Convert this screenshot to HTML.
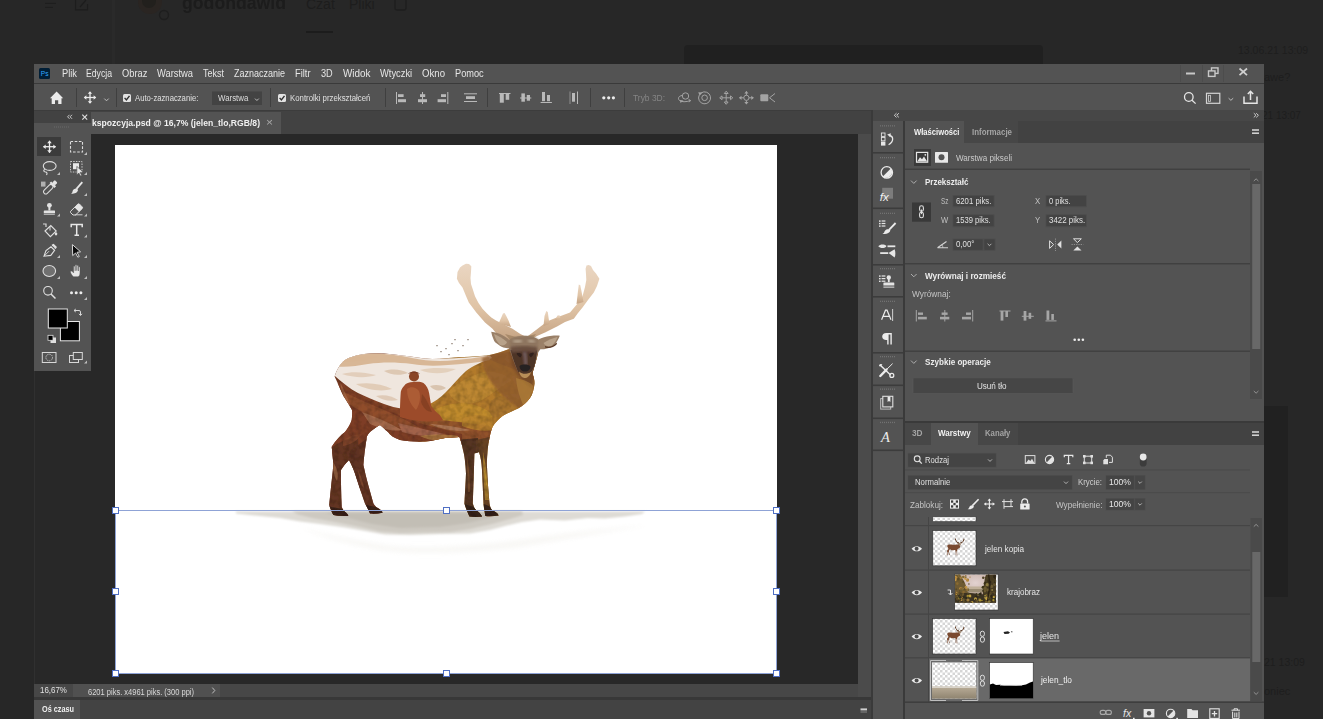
<!DOCTYPE html>
<html><head><meta charset="utf-8">
<style>
*{margin:0;padding:0;box-sizing:border-box}
html,body{width:1323px;height:719px;overflow:hidden;background:#262626;font-family:"Liberation Sans",sans-serif;color:#ddd;font-size:10px;position:relative}
.a{position:absolute}
.t{position:absolute;white-space:nowrap;line-height:1;transform-origin:0 0}
svg{position:absolute;overflow:visible}
</style></head><body>
<!-- ===== background app (dimmed) ===== -->
<div class="a" style="left:0;top:0;width:1323px;height:719px;background:#272727"></div>
<div class="a" style="left:112px;top:0;width:3px;height:64px;background:#2a2a2a"></div>
<div class="a" style="left:684px;top:45px;width:359px;height:19px;background:#202020;border-radius:4px 4px 0 0"></div>
<div class="a" style="left:1264px;top:406px;width:24px;height:191px;background:#212121"></div>

<svg width="1323" height="719" style="left:0;top:0">
 <g fill="#1e1e1e"><rect x="45" y="2.8" width="11" height="1.2"/><rect x="45" y="6.8" width="8" height="1.2"/></g>
 <path d="M75.5 0 V9.8 H87.5 V4" fill="none" stroke="#1d1d1d" stroke-width="1.2"/>
 <path d="M80 7 L86 0" stroke="#1d1d1d" stroke-width="1.2"/>
 <circle cx="150" cy="2" r="12" fill="#2a2522"/>
 <circle cx="149" cy="1" r="7" fill="#22201d"/>
 <circle cx="164" cy="15" r="4.5" fill="none" stroke="#1e1e1e" stroke-width="1.4"/>
 <rect x="306" y="31" width="27" height="2" fill="#1c1c1c"/>
 <rect x="395" y="-3" width="11" height="13" rx="2" fill="none" stroke="#1e1e1e" stroke-width="1.4"/>
</svg>
<div class="t" style="left:182px;top:-7px;font-size:19px;font-weight:bold;color:#1c1c1c;transform:scaleX(0.93)">godondawid</div>
<div class="t" style="left:306px;top:-3.5px;font-size:14px;color:#1d1d1d">Czat</div>
<div class="t" style="left:349px;top:-3.5px;font-size:14px;color:#1d1d1d">Pliki</div>
<div class="t" style="left:1238px;top:45px;font-size:10.5px;color:#1e1e1e">13.06.21 13:09</div>
<div class="t" style="left:1264px;top:72px;font-size:11px;color:#1e1e1e">awe?</div>
<div class="t" style="left:1262px;top:111px;font-size:10px;color:#1e1e1e">21 13:07</div>
<div class="t" style="left:1264px;top:657px;font-size:10.5px;color:#1e1e1e">21 13:09</div>
<div class="t" style="left:1264px;top:686px;font-size:11px;color:#1e1e1e">oniec</div>

<!-- ===== PS window ===== -->
<!-- menubar -->
<div class="a" style="left:34px;top:64px;width:1230px;height:19px;background:#535353"></div>
<div class="a" style="left:34px;top:83px;width:1230px;height:1px;background:#3a3a3a"></div>
<!-- options bar -->
<div class="a" style="left:34px;top:84px;width:1230px;height:26px;background:#535353"></div>
<div class="a" style="left:34px;top:110px;width:1230px;height:1px;background:#3c3c3c"></div>
<!-- doc tab bar -->
<div class="a" style="left:34px;top:111px;width:837px;height:23px;background:#424242"></div>
<div class="a" style="left:91px;top:112px;width:190px;height:22px;background:#535353"></div>
<!-- pasteboard -->
<div class="a" style="left:34px;top:134px;width:824px;height:550px;background:#282828"></div>
<div class="a" style="left:34px;top:134px;width:1px;height:550px;background:#303030"></div>
<!-- vertical scroll strip -->
<div class="a" style="left:858px;top:134px;width:13px;height:563px;background:#4b4b4b"></div>
<div class="a" style="left:871px;top:110px;width:2px;height:609px;background:#3a3a3a"></div>
<!-- status bar -->
<div class="a" style="left:34px;top:684px;width:824px;height:13px;background:#474747"></div>
<div class="a" style="left:73px;top:684px;width:147px;height:13px;background:#505050"></div>
<div class="a" style="left:34px;top:697px;width:837px;height:3px;background:#383838"></div>
<!-- timeline -->
<div class="a" style="left:34px;top:700px;width:837px;height:19px;background:#434343"></div>
<div class="a" style="left:34px;top:700px;width:46px;height:19px;background:#535353"></div>

<!-- right dock header strip -->
<div class="a" style="left:873px;top:110px;width:391px;height:11px;background:#474747"></div>
<!-- icon column -->
<div class="a" style="left:873px;top:121px;width:30px;height:598px;background:#535353"></div>
<div class="a" style="left:903px;top:121px;width:2px;height:598px;background:#3a3a3a"></div>
<!-- properties panel -->
<div class="a" style="left:905px;top:121px;width:359px;height:22px;background:#424242"></div>
<div class="a" style="left:905px;top:121px;width:59px;height:22px;background:#535353"></div>
<div class="a" style="left:964px;top:121px;width:54px;height:22px;background:#474747"></div>
<div class="a" style="left:905px;top:143px;width:359px;height:278px;background:#535353"></div>
<div class="a" style="left:905px;top:421px;width:359px;height:2px;background:#3a3a3a"></div>
<!-- layers panel -->
<div class="a" style="left:905px;top:423px;width:359px;height:22px;background:#424242"></div>
<div class="a" style="left:905px;top:423px;width:26px;height:22px;background:#474747"></div>
<div class="a" style="left:931px;top:423px;width:47px;height:22px;background:#535353"></div>
<div class="a" style="left:978px;top:423px;width:40px;height:22px;background:#474747"></div>
<div class="a" style="left:905px;top:445px;width:359px;height:274px;background:#535353"></div>


<!-- ===== Tools panel ===== -->
<div class="a" style="left:34px;top:112px;width:57px;height:11px;background:#424242"></div>
<div class="a" style="left:34px;top:123px;width:57px;height:248px;background:#535353"></div>
<div class="a" style="left:37px;top:137px;width:24px;height:18.5px;background:#3b3b3b"></div>
<svg width="1323" height="719" style="left:0;top:0">
 <g fill="none" stroke="#d8d8d8" stroke-width="0.9">
  <path d="M69.5 114.8 L67.6 116.8 L69.5 118.8 M72 114.8 L70.1 116.8 L72 118.8"/>
 </g>
 <g stroke="#e0e0e0" stroke-width="1.1"><line x1="82.3" y1="114.6" x2="87.2" y2="119.6"/><line x1="87.2" y1="114.6" x2="82.3" y2="119.6"/></g>
 <g fill="#6a6a6a"><rect x="54" y="126.5" width="1" height="1"/><rect x="56" y="126.5" width="1" height="1"/><rect x="58" y="126.5" width="1" height="1"/><rect x="60" y="126.5" width="1" height="1"/><rect x="62" y="126.5" width="1" height="1"/><rect x="64" y="126.5" width="1" height="1"/><rect x="66" y="126.5" width="1" height="1"/><rect x="68" y="126.5" width="1" height="1"/></g>
 <!-- move -->
 <g stroke="#ececec" stroke-width="1.3"><line x1="43.5" y1="146.7" x2="55.5" y2="146.7"/><line x1="49.5" y1="140.8" x2="49.5" y2="152.7"/></g>
 <g fill="#ececec"><path d="M49.5 140.5 L51.8 143.2 L47.2 143.2Z"/><path d="M49.5 153 L51.8 150.3 L47.2 150.3Z"/><path d="M43 146.7 L45.7 144.4 L45.7 149Z"/><path d="M56 146.7 L53.3 144.4 L53.3 149Z"/></g>
 <!-- marquee -->
 <rect x="70.5" y="141.5" width="12" height="10.5" fill="none" stroke="#dcdcdc" stroke-width="1.1" stroke-dasharray="2.6 1.6"/>
 <!-- small triangles -->
 <g fill="#bdbdbd">
  <path d="M84 155 L87 155 L87 152Z"/><path d="M57 175 L60 175 L60 172Z"/><path d="M84 175 L87 175 L87 172Z"/><path d="M84 196 L87 196 L87 193Z"/>
  <path d="M57 216.5 L60 216.5 L60 213.5Z"/><path d="M84 216.5 L87 216.5 L87 213.5Z"/><path d="M84 237.5 L87 237.5 L87 234.5Z"/>
  <path d="M57 258 L60 258 L60 255Z"/><path d="M84 258 L87 258 L87 255Z"/><path d="M57 279 L60 279 L60 276Z"/><path d="M84 279 L87 279 L87 276Z"/><path d="M84 300 L87 300 L87 297Z"/><path d="M84 363.5 L87 363.5 L87 360.5Z"/>
 </g>
 <!-- lasso -->
 <g fill="none" stroke="#dedede" stroke-width="1.1">
  <ellipse cx="49.7" cy="166" rx="6.4" ry="4.4"/>
  <path d="M45 169.5 C43 170 43.5 172 45.5 172 C47 172 47.5 173.5 46.5 175"/>
 </g>
 <!-- object select -->
 <rect x="70.5" y="161.5" width="11.5" height="10.5" fill="none" stroke="#c8c8c8" stroke-width="1" stroke-dasharray="1.5 1.2"/>
 <rect x="73" y="163.2" width="6" height="6" fill="#e8e8e8"/>
 <path d="M76.8 166.4 L83.2 172 L80.2 172.4 L81.8 175.4 L80.4 176 L78.8 173 L76.8 175Z" fill="#e8e8e8" stroke="#535353" stroke-width="0.7"/>
 <!-- eyedropper -->
 <rect x="41" y="181.6" width="4.5" height="5" fill="#cfcfcf" opacity="0.75"/>
 <g transform="rotate(45 49.5 188)">
  <rect x="47.3" y="184" width="4.4" height="11.5" rx="2.2" fill="none" stroke="#e0e0e0" stroke-width="1"/>
  <rect x="46" y="182.2" width="7" height="2.2" fill="#e4e4e4"/>
  <rect x="47.6" y="178.6" width="3.8" height="3.8" rx="1" fill="#e4e4e4"/>
 </g>
 <!-- brush -->
 <path d="M82.3 182.2 L76.5 188.8" stroke="#e6e6e6" stroke-width="1.8"/>
 <path d="M76.8 188.5 C73 188.5 72.5 191 72.5 192 C72 193 71 193.8 71 193.8 C74 194 77.5 193 78 190Z" fill="#e6e6e6"/>
 <!-- stamp -->
 <g fill="#e2e2e2"><circle cx="49.4" cy="205.3" r="2.4"/><rect x="48.4" y="206.5" width="2" height="4"/><path d="M44.5 210.5 H54.5 Q55 210.5 55 211 V213.2 H43.8 V211 Q43.8 210.5 44.5 210.5Z"/><rect x="43.8" y="213.8" width="11" height="1.1" opacity="0.7"/></g>
 <!-- eraser -->
 <path d="M70.6 211.3 L77.8 204.2 Q78.6 203.4 79.5 204.2 L82.2 206.9 Q83 207.8 82.2 208.6 L75.5 215 L73 215 L70.6 212.6 Q70 212 70.6 211.3Z" fill="none" stroke="#dedede" stroke-width="1"/>
 <path d="M74.6 207.6 L77.8 204.2 Q78.6 203.4 79.5 204.2 L82.2 206.9 Q83 207.8 82.2 208.6 L79 211.8Z" fill="#e4e4e4"/>
 <line x1="75" y1="214.8" x2="82.5" y2="214.8" stroke="#dedede" stroke-width="0.9"/>
 <!-- bucket -->
 <path d="M45 231 L50.8 225.5 L56.2 231 L50.4 236.6Z" fill="none" stroke="#e0e0e0" stroke-width="1.1"/>
 <path d="M43 224 L46 224 L46 227" fill="none" stroke="#d8d8d8" stroke-width="1.2"/>
 <path d="M50 226 L50 230.5" stroke="#e0e0e0" stroke-width="1"/>
 <ellipse cx="56" cy="233.8" rx="1.3" ry="1.6" fill="#e0e0e0"/>
 <!-- T -->
 <path d="M71.2 227.2 V224.6 H82.2 V227.2 M76.7 224.6 V235.3 M74.5 235.3 H79" fill="none" stroke="#e8e8e8" stroke-width="1.5"/>
 <!-- pen -->
 <path d="M44 256.2 L46 250.5 L51 246.8 L54.6 250.4 L50.8 255.4 Z" fill="none" stroke="#e0e0e0" stroke-width="1.1"/>
 <path d="M52 245.5 L53.5 244.6 L56 247.1 L55.1 248.6" fill="#e0e0e0" stroke="#e0e0e0" stroke-width="1.5"/>
 <path d="M44 256.2 L49 251.2" stroke="#e0e0e0" stroke-width="0.9"/>
 <!-- path select arrow -->
 <path d="M72.4 244.6 L80.6 251.8 L77 252.3 L79.3 256.5 L77.8 257.2 L75.6 253 L72.7 255.6Z" fill="#0a0a0a" stroke="#d4d4d4" stroke-width="1"/>
 <!-- ellipse -->
 <ellipse cx="49.3" cy="271" rx="6.3" ry="5.5" fill="#707070" stroke="#e0e0e0" stroke-width="1.1"/>
 <!-- hand -->
 <path d="M73.4 276.8 C71.5 275 70.4 272.8 70.4 271.6 C70.6 270.8 71.8 270.8 72.6 271.8 L73.6 272.8 V266.8 C73.6 265.8 75.2 265.8 75.2 266.8 V270.8 V265.6 C75.2 264.6 76.8 264.6 76.8 265.6 V270.6 V266 C76.8 265 78.4 265 78.4 266 V271 V267.5 C78.4 266.5 80 266.5 80 267.5 V273 C80 275 79 276.8 77.5 276.8Z" fill="#e6e6e6" stroke="#535353" stroke-width="0.5"/>
 <!-- zoom -->
 <circle cx="48" cy="290.8" r="4.3" fill="none" stroke="#e0e0e0" stroke-width="1.1"/>
 <line x1="51" y1="294" x2="55.5" y2="298.5" stroke="#e0e0e0" stroke-width="1.5"/>
 <!-- dots -->
 <g fill="#ececec"><circle cx="71.5" cy="292.8" r="1.5"/><circle cx="76.2" cy="292.8" r="1.5"/><circle cx="80.9" cy="292.8" r="1.5"/></g>
 <!-- colors -->
 <rect x="60.4" y="321.5" width="19" height="19.3" fill="#000" stroke="#e8e8e8" stroke-width="1"/>
 <rect x="48.3" y="309" width="19" height="19" fill="#000" stroke="#e8e8e8" stroke-width="1"/>
 <path d="M74 310.5 L79 310.5 Q80.5 310.5 80.5 312 L80.5 315" fill="none" stroke="#d8d8d8" stroke-width="1"/>
 <path d="M74 310.5 L75.8 309 M74 310.5 L75.8 312 M80.5 315.5 L79 313.8 M80.5 315.5 L82 313.8" fill="none" stroke="#d8d8d8" stroke-width="1"/>
 <rect x="50.5" y="337.5" width="5.5" height="5.5" fill="#e0e0e0"/>
 <rect x="48" y="335.3" width="5" height="5" fill="#000" stroke="#e0e0e0" stroke-width="0.8"/>
 <!-- quick mask / screen mode -->
 <rect x="42.3" y="352.5" width="13.7" height="10" fill="none" stroke="#d8d8d8" stroke-width="1"/>
 <circle cx="49.2" cy="357.5" r="3.3" fill="none" stroke="#d8d8d8" stroke-width="0.9" stroke-dasharray="1.2 1"/>
 <rect x="69.5" y="355.5" width="9" height="7" fill="none" stroke="#d8d8d8" stroke-width="1"/>
 <rect x="73.3" y="352.5" width="9" height="7" fill="#535353" stroke="#d8d8d8" stroke-width="1"/>
</svg>


<svg width="1323" height="719" style="left:0;top:0">
 <polyline points="212.3,687.6 214.8,690.5 212.3,693.4" fill="none" stroke="#c8c8c8" stroke-width="0.9"/>
 <g fill="#d0d0d0"><rect x="860.5" y="708.4" width="6.5" height="2"/></g>
 <rect x="860.5" y="711.6" width="6.5" height="0.8" fill="#9a9a9a"/>
</svg>


<!-- ===== icon column ===== -->
<svg width="1323" height="719" style="left:0;top:0">
 <g fill="#3c3c3c"><rect x="873" y="152" width="30" height="1.6"/><rect x="873" y="207.5" width="30" height="1.6"/><rect x="873" y="264" width="30" height="1.6"/><rect x="873" y="296" width="30" height="1.6"/><rect x="873" y="352" width="30" height="1.6"/><rect x="873" y="384.5" width="30" height="1.6"/><rect x="873" y="417.5" width="30" height="1.6"/><rect x="873" y="449.5" width="30" height="1.6"/></g>
 <g fill="#727272"><rect x="880" y="125.2" width="1" height="1.3"/><rect x="882" y="125.2" width="1" height="1.3"/><rect x="884" y="125.2" width="1" height="1.3"/><rect x="886" y="125.2" width="1" height="1.3"/><rect x="888" y="125.2" width="1" height="1.3"/><rect x="890" y="125.2" width="1" height="1.3"/><rect x="892" y="125.2" width="1" height="1.3"/><rect x="894" y="125.2" width="1" height="1.3"/><rect x="880" y="157" width="1" height="1.3"/><rect x="882" y="157" width="1" height="1.3"/><rect x="884" y="157" width="1" height="1.3"/><rect x="886" y="157" width="1" height="1.3"/><rect x="888" y="157" width="1" height="1.3"/><rect x="890" y="157" width="1" height="1.3"/><rect x="892" y="157" width="1" height="1.3"/><rect x="894" y="157" width="1" height="1.3"/><rect x="880" y="212.7" width="1" height="1.3"/><rect x="882" y="212.7" width="1" height="1.3"/><rect x="884" y="212.7" width="1" height="1.3"/><rect x="886" y="212.7" width="1" height="1.3"/><rect x="888" y="212.7" width="1" height="1.3"/><rect x="890" y="212.7" width="1" height="1.3"/><rect x="892" y="212.7" width="1" height="1.3"/><rect x="894" y="212.7" width="1" height="1.3"/><rect x="880" y="268" width="1" height="1.3"/><rect x="882" y="268" width="1" height="1.3"/><rect x="884" y="268" width="1" height="1.3"/><rect x="886" y="268" width="1" height="1.3"/><rect x="888" y="268" width="1" height="1.3"/><rect x="890" y="268" width="1" height="1.3"/><rect x="892" y="268" width="1" height="1.3"/><rect x="894" y="268" width="1" height="1.3"/><rect x="880" y="300.7" width="1" height="1.3"/><rect x="882" y="300.7" width="1" height="1.3"/><rect x="884" y="300.7" width="1" height="1.3"/><rect x="886" y="300.7" width="1" height="1.3"/><rect x="888" y="300.7" width="1" height="1.3"/><rect x="890" y="300.7" width="1" height="1.3"/><rect x="892" y="300.7" width="1" height="1.3"/><rect x="894" y="300.7" width="1" height="1.3"/><rect x="880" y="356" width="1" height="1.3"/><rect x="882" y="356" width="1" height="1.3"/><rect x="884" y="356" width="1" height="1.3"/><rect x="886" y="356" width="1" height="1.3"/><rect x="888" y="356" width="1" height="1.3"/><rect x="890" y="356" width="1" height="1.3"/><rect x="892" y="356" width="1" height="1.3"/><rect x="894" y="356" width="1" height="1.3"/><rect x="880" y="388.5" width="1" height="1.3"/><rect x="882" y="388.5" width="1" height="1.3"/><rect x="884" y="388.5" width="1" height="1.3"/><rect x="886" y="388.5" width="1" height="1.3"/><rect x="888" y="388.5" width="1" height="1.3"/><rect x="890" y="388.5" width="1" height="1.3"/><rect x="892" y="388.5" width="1" height="1.3"/><rect x="894" y="388.5" width="1" height="1.3"/><rect x="880" y="421.8" width="1" height="1.3"/><rect x="882" y="421.8" width="1" height="1.3"/><rect x="884" y="421.8" width="1" height="1.3"/><rect x="886" y="421.8" width="1" height="1.3"/><rect x="888" y="421.8" width="1" height="1.3"/><rect x="890" y="421.8" width="1" height="1.3"/><rect x="892" y="421.8" width="1" height="1.3"/><rect x="894" y="421.8" width="1" height="1.3"/></g>
 <!-- history -->
 <g fill="none" stroke="#e4e4e4" stroke-width="0.9"><rect x="881.4" y="133" width="3.6" height="3.4"/><rect x="881.4" y="137.4" width="3.6" height="3.4"/></g>
 <rect x="881" y="141.6" width="4.4" height="4" fill="#e8e8e8"/>
 <path d="M889.2 135.5 C893.6 136 894.2 141.5 888.6 144.8" fill="none" stroke="#e8e8e8" stroke-width="1.3"/>
 <path d="M887.2 134.4 L890.8 133.2 L890.4 137.2Z" fill="#e8e8e8"/>
 <!-- adjustments -->
 <circle cx="886.8" cy="172.4" r="5.7" fill="none" stroke="#ececec" stroke-width="1.3"/>
 <path d="M890.8 168.4 A5.7 5.7 0 0 1 882.8 176.4Z" fill="#ececec"/>
 <!-- fx -->
 <rect x="882.2" y="187.8" width="10.8" height="10.9" fill="#7c7c7c"/>
 <text x="879.8" y="200.6" font-family="Liberation Sans" font-style="italic" font-size="11.5" fill="#f2f2f2">fx</text>
 <!-- brushes -->
 <g fill="#e4e4e4"><rect x="879" y="220.4" width="1.6" height="1.4"/><rect x="879" y="222.9" width="1.6" height="1.4"/><rect x="879" y="225.4" width="1.6" height="1.4"/>
 <rect x="881.6" y="220.4" width="3.8" height="1.2"/><rect x="881.6" y="222.9" width="3.8" height="1.2"/><rect x="881.6" y="225.4" width="3.8" height="1.2"/></g>
 <path d="M895.6 223 L889 229.8" stroke="#ececec" stroke-width="1.8"/>
 <path d="M889.4 229.4 C885.5 228.8 884.5 231.5 884.2 232.4 C883.8 233.2 882.2 233.8 882.2 233.8 C886 234.6 889.6 233.4 890.4 230.6Z" fill="#ececec"/>
 <!-- brush settings -->
 <path d="M878.3 246.2 C880 244 884 243.8 886.2 245.6 L886.2 246.8 C884 248.6 880 248.4 878.3 246.2Z" fill="#e6e6e6"/>
 <rect x="887.5" y="245.4" width="7.8" height="1.8" fill="#e6e6e6"/>
 <rect x="880.2" y="252.2" width="8" height="1.8" fill="#e6e6e6"/>
 <path d="M888.5 253 L894.6 249.2 C895.6 251.5 895.6 255.5 894.6 257.4Z" fill="#e6e6e6"/>
 <!-- clone source -->
 <g fill="#e4e4e4"><rect x="879" y="275.4" width="1.6" height="1.4"/><rect x="879" y="278" width="1.6" height="1.4"/><rect x="879" y="280.6" width="1.6" height="1.4"/>
 <rect x="881.6" y="275.4" width="3.8" height="1.2"/><rect x="881.6" y="278" width="3.8" height="1.2"/><rect x="881.6" y="280.6" width="3.8" height="1.2"/>
 <circle cx="888.8" cy="277.4" r="2.2"/><rect x="887.9" y="278.6" width="1.8" height="3.6"/><path d="M884.2 282.4 H893.6 Q894.3 282.4 894.3 283.1 V285.6 H883.4 V283.1 Q883.4 282.4 884.2 282.4Z"/><rect x="883.4" y="286.6" width="10.9" height="1"/></g>
 <!-- character -->
 <path d="M881.6 319.8 L885.5 310.2 L887 310.2 L891 319.8 M883 316.3 H889.6" fill="none" stroke="#ececec" stroke-width="1.2"/>
 <rect x="892.2" y="309" width="0.9" height="12" fill="#dcdcdc"/>
 <!-- paragraph -->
 <path d="M886.4 333 H891.8 V344.4 H890.4 V334.4 H888.6 V344.4 H887.2 V340 C883.6 340 882.2 338.4 882.2 336.5 C882.2 334.6 883.6 333 886.4 333Z" fill="#ececec"/>
 <!-- tools (wrench/screwdriver) -->
 <path d="M880.3 376 L886.5 369.6" stroke="#ececec" stroke-width="2.4" stroke-linecap="round"/>
 <path d="M886.5 369.6 L892.6 363.6" stroke="#ececec" stroke-width="1"/>
 <path d="M879.8 364.8 L890.8 375.2" stroke="#ececec" stroke-width="1.4"/>
 <path d="M879 366.2 C879 363.8 881.4 363.4 882.4 364.6 L881 366.2Z" fill="#ececec"/>
 <circle cx="891.8" cy="375.4" r="2" fill="none" stroke="#ececec" stroke-width="1.2"/>
 <!-- notes / artboard icon -->
 <rect x="880.7" y="398.6" width="10" height="10.5" fill="none" stroke="#bdbdbd" stroke-width="1"/>
 <rect x="882.8" y="396.3" width="10" height="10.6" fill="#535353" stroke="#e0e0e0" stroke-width="1.1"/>
 <path d="M887.6 396.8 H890.4 V402 L889 401 L887.6 402Z" fill="#e8e8e8"/>
 <!-- glyphs -->
 <text x="881" y="441.6" font-family="Liberation Serif" font-style="italic" font-size="14.5" fill="#ececec">A</text>
</svg>


<!-- ===== properties panel content ===== -->
<svg width="1323" height="719" style="left:0;top:0">
 <!-- panel menu icon -->
 <g fill="#d0d0d0"><rect x="1252" y="129.2" width="7" height="1.6"/><rect x="1252" y="132.4" width="7" height="1.6"/></g>
 <!-- pixel layer icons -->
 <rect x="914" y="149" width="17" height="17" fill="#3a3a3a"/>
 <rect x="916.5" y="152.4" width="11.2" height="9.8" fill="none" stroke="#e6e6e6" stroke-width="1.2"/>
 <path d="M917.2 161.6 L920 157.2 L922 159.2 L924 156.5 L927.2 161.6Z" fill="#e6e6e6"/>
 <circle cx="925.3" cy="154.8" r="0.9" fill="#e6e6e6"/>
 <rect x="935" y="152" width="13" height="10.7" rx="0.5" fill="#e8e8e8"/>
 <circle cx="941.5" cy="157.3" r="3" fill="#535353"/>
 <!-- dividers -->
 <g fill="#404040"><rect x="905" y="168.6" width="345" height="1.4"/><rect x="905" y="263" width="345" height="1.4"/><rect x="905" y="350.5" width="345" height="1.4"/></g>
 <!-- chevrons -->
 <g fill="none" stroke="#b8b8b8" stroke-width="0.9">
  <polyline points="911,180.6 913.8,183.4 916.6,180.6"/>
  <polyline points="911,274 913.8,276.8 916.6,274"/>
  <polyline points="911,360.6 913.8,363.4 916.6,360.6"/>
 </g>
 <!-- link box -->
 <rect x="912" y="202.5" width="19" height="19.2" fill="#393939"/>
 <g fill="none" stroke="#e0e0e0" stroke-width="1.1"><rect x="919.6" y="205.8" width="3.8" height="5.6" rx="1.9"/><rect x="919.6" y="212.2" width="3.8" height="5.6" rx="1.9"/></g>
 <rect x="921" y="209.5" width="1" height="4.6" fill="#e0e0e0"/>
 <!-- fields -->
 <g fill="#434343" stroke="#4d4d4d" stroke-width="0.8">
  <rect x="953" y="195.4" width="41" height="11.3"/>
  <rect x="1046" y="195.4" width="40.3" height="11.3"/>
  <rect x="953" y="214.8" width="41" height="11.9"/>
  <rect x="1046" y="214.8" width="40.3" height="11.9"/>
  <rect x="953" y="239" width="30" height="11.2"/>
  <rect x="984" y="239" width="11" height="11.2"/>
 </g>
 <polyline points="987.6,243.8 989.5,245.7 991.4,243.8" fill="none" stroke="#c0c0c0" stroke-width="0.9"/>
 <!-- angle icon -->
 <path d="M937.5 247.8 H948 M937.5 247.8 L946.5 241.5" fill="none" stroke="#d4d4d4" stroke-width="1.1"/>
 <path d="M941.8 244.8 Q943 246.2 942.8 247.8" fill="none" stroke="#d4d4d4" stroke-width="0.8"/>
 <!-- flip icons -->
 <path d="M1049.6 240.8 L1053.6 244.6 L1049.6 248.4Z" fill="none" stroke="#e0e0e0" stroke-width="1"/>
 <path d="M1061.4 240.6 L1057.2 244.6 L1061.4 248.6Z" fill="#e0e0e0"/>
 <path d="M1055.5 238.5 V251" stroke="#9a9a9a" stroke-width="0.8" stroke-dasharray="1.3 1"/>
 <path d="M1073.5 238.8 L1077.4 242.6 L1081.3 238.8Z" fill="none" stroke="#e0e0e0" stroke-width="1"/>
 <path d="M1073.3 250.4 L1077.4 246.4 L1081.5 250.4Z" fill="#e0e0e0"/>
 <path d="M1071.5 244.5 H1083.3" stroke="#9a9a9a" stroke-width="0.8" stroke-dasharray="1.3 1"/>
 <!-- align icons -->
 <g fill="#a6a6a6">
  <rect x="915.8" y="310" width="1" height="11.5"/><rect x="918" y="312.5" width="5" height="2.4"/><rect x="918" y="316.8" width="8.8" height="2.6"/>
  <rect x="944.3" y="310" width="1" height="11.5"/><rect x="941.6" y="312.5" width="6" height="2.4"/><rect x="940" y="316.8" width="9.3" height="2.6"/>
  <rect x="972.2" y="310" width="1" height="11.5"/><rect x="966" y="312.5" width="5" height="2.4"/><rect x="962" y="316.8" width="9" height="2.6"/>
  <rect x="999.5" y="310.5" width="11" height="1"/><rect x="1000.6" y="311" width="2.8" height="9.6"/><rect x="1005.4" y="311" width="2.6" height="6"/>
  <rect x="1021.8" y="315.8" width="12" height="1"/><rect x="1023.6" y="311" width="2.8" height="9.6"/><rect x="1028.6" y="312.8" width="2.6" height="6"/>
  <rect x="1046.5" y="310.5" width="2.8" height="9.4"/><rect x="1051.3" y="314" width="2.6" height="5.9"/><rect x="1045.5" y="320.4" width="11" height="1"/>
 </g>
 <g fill="#ececec"><circle cx="1074.7" cy="339.8" r="1.3"/><circle cx="1078.8" cy="339.8" r="1.3"/><circle cx="1082.9" cy="339.8" r="1.3"/></g>
 <!-- button -->
 <rect x="913" y="377.8" width="160" height="15.7" rx="1" fill="#464646" stroke="#5a5a5a" stroke-width="0.6"/>
 <!-- scrollbar -->
 <rect x="1250" y="171" width="12" height="228" fill="#4a4a4a"/>
 <rect x="1252.2" y="184" width="8" height="165" fill="#686868"/>
 <polyline points="1253.8,181 1256.1,178.8 1258.4,181" fill="none" stroke="#9a9a9a" stroke-width="0.9"/>
 <polyline points="1253.8,391 1256.1,393.2 1258.4,391" fill="none" stroke="#9a9a9a" stroke-width="0.9"/>
</svg>


<!-- ===== layers panel content ===== -->
<svg width="1323" height="719" style="left:0;top:0">
 <defs>
  <pattern id="ck" x="0" y="0" width="5" height="5" patternUnits="userSpaceOnUse">
   <rect width="5" height="5" fill="#ffffff"/><rect width="2.5" height="2.5" fill="#d6d6d6"/><rect x="2.5" y="2.5" width="2.5" height="2.5" fill="#d6d6d6"/>
  </pattern>
  <radialGradient id="skyr" cx="0.5" cy="0.3" r="0.6">
   <stop offset="0" stop-color="#e2d2d0"/><stop offset="0.6" stop-color="#cdb8b0"/><stop offset="1" stop-color="#9a8466"/>
  </radialGradient>
  <filter id="darken" color-interpolation-filters="sRGB"><feColorMatrix type="matrix" values="0.45 0 0 0 0  0 0.33 0 0 0  0 0 0.25 0 0  0 0 0 1.4 0"/></filter>
  <filter id="tb" x="-10%" y="-10%" width="120%" height="120%"><feGaussianBlur stdDeviation="0.45"/></filter>
  <clipPath id="kclip"><rect x="955" y="574.5" width="41" height="28.2"/></clipPath>
  <pattern id="ckd" x="950.5" y="499.5" width="5.6" height="6" patternUnits="userSpaceOnUse">
   <rect width="5.6" height="6" fill="#202020"/><rect width="2.8" height="3" fill="#ececec"/><rect x="2.8" y="3" width="2.8" height="3" fill="#ececec"/>
  </pattern>
  <linearGradient id="sky" x1="0" y1="0" x2="0" y2="1">
   <stop offset="0" stop-color="#d9c6b0"/><stop offset="0.45" stop-color="#cdb79a"/><stop offset="0.7" stop-color="#8a7a55"/><stop offset="1" stop-color="#4a4224"/>
  </linearGradient>
  <linearGradient id="gnd" x1="0" y1="0" x2="0" y2="1">
   <stop offset="0" stop-color="#b9ad98"/><stop offset="1" stop-color="#8f8470"/>
  </linearGradient>
 </defs>
 <g fill="#d0d0d0"><rect x="1252" y="431.2" width="7" height="1.6"/><rect x="1252" y="434.4" width="7" height="1.6"/></g>
 <!-- filter row -->
 <rect x="908" y="453.3" width="88" height="13.7" fill="#444444" stroke="#4c4c4c" stroke-width="0.6"/>
 <circle cx="917.2" cy="458.8" r="2.9" fill="none" stroke="#e0e0e0" stroke-width="1.1"/>
 <line x1="919.3" y1="461" x2="921.8" y2="463.6" stroke="#e0e0e0" stroke-width="1.3"/>
 <polyline points="988,459.4 990,461.4 992,459.4" fill="none" stroke="#c0c0c0" stroke-width="0.9"/>
 <g fill="none" stroke="#dedede" stroke-width="1">
  <rect x="1025.3" y="455.6" width="9.6" height="7.8"/>
 </g>
 <path d="M1026 463 L1028.5 459.5 L1030.3 461 L1032 458.8 L1034.3 463Z" fill="#dedede"/>
 <circle cx="1049.5" cy="459.5" r="4.1" fill="none" stroke="#e4e4e4" stroke-width="1.1"/>
 <path d="M1052.4 456.6 A4.1 4.1 0 0 1 1046.6 462.4Z" fill="#e4e4e4"/>
 <path d="M1064.3 457.3 V455.4 H1072.8 V457.3 M1068.55 455.4 V463.6 M1066.8 463.6 H1070.3" fill="none" stroke="#e6e6e6" stroke-width="1.2"/>
 <rect x="1084.3" y="456.2" width="7.4" height="6.8" fill="none" stroke="#e0e0e0" stroke-width="1"/>
 <g fill="#e0e0e0"><rect x="1083" y="455" width="2.6" height="2.6"/><rect x="1090.4" y="455" width="2.6" height="2.6"/><rect x="1083" y="461.6" width="2.6" height="2.6"/><rect x="1090.4" y="461.6" width="2.6" height="2.6"/></g>
 <path d="M1104.5 459 H1108 V464.2 H1103.3 V460.3Z" fill="#e0e0e0"/>
 <path d="M1106.3 457.8 V455.2 H1110.5 L1112.4 457.2 V462.4 H1109" fill="none" stroke="#e0e0e0" stroke-width="1"/>
 <rect x="1139.8" y="453.6" width="6.8" height="13" rx="3.4" fill="#3c3c3c"/>
 <circle cx="1143.2" cy="457" r="3.4" fill="#e8e8e8"/>
 <rect x="905" y="469.4" width="345" height="1" fill="#4a4a4a"/>
 <!-- blend row -->
 <rect x="908" y="475.5" width="164" height="13.8" fill="#444444" stroke="#4c4c4c" stroke-width="0.6"/>
 <polyline points="1064,481.6 1066,483.6 1068,481.6" fill="none" stroke="#c0c0c0" stroke-width="0.9"/>
 <rect x="1106" y="475.5" width="28" height="13.8" fill="#444444" stroke="#4c4c4c" stroke-width="0.6"/>
 <rect x="1135" y="475.5" width="10" height="13.8" fill="#464646" stroke="#4c4c4c" stroke-width="0.6"/>
 <polyline points="1138.2,481.6 1140,483.4 1141.8,481.6" fill="none" stroke="#c0c0c0" stroke-width="0.9"/>
 <rect x="905" y="492.2" width="345" height="1" fill="#4a4a4a"/>
 <!-- lock row -->
 <rect x="950" y="499.4" width="9" height="9.2" fill="#ececec"/><g fill="#3a3a3a"><rect x="951" y="500.4" width="2.2" height="2.3"/><rect x="955.8" y="500.4" width="2.2" height="2.3"/><rect x="953.4" y="502.9" width="2.2" height="2.3"/><rect x="951" y="505.3" width="2.2" height="2.3"/><rect x="955.8" y="505.3" width="2.2" height="2.3"/></g>
 <path d="M978.6 499.2 L972.4 505.6" stroke="#ececec" stroke-width="1.6"/>
 <path d="M972.8 505.2 C969.8 505 969.3 507.2 969 508 C968.6 508.6 967.8 509.2 967.8 509.2 C970.8 509.6 973.4 508.6 973.9 506.5Z" fill="#ececec"/>
 <g stroke="#ececec" stroke-width="1.1"><line x1="984.5" y1="504" x2="994.3" y2="504"/><line x1="989.4" y1="499" x2="989.4" y2="509"/></g>
 <g fill="#ececec"><path d="M989.4 498.6 L991.2 500.8 L987.6 500.8Z"/><path d="M989.4 509.4 L991.2 507.2 L987.6 507.2Z"/><path d="M984 504 L986.2 502.2 L986.2 505.8Z"/><path d="M994.8 504 L992.6 502.2 L992.6 505.8Z"/></g>
 <path d="M1002 501.6 H1013 M1004 499.2 V508.8 M1004 506.6 H1013 M1011 499.2 V506.6" fill="none" stroke="#e0e0e0" stroke-width="1"/>
 <path d="M1021.8 503.5 V501.8 A2.9 2.9 0 0 1 1027.6 501.8 V503.5" fill="none" stroke="#ececec" stroke-width="1.3"/>
 <rect x="1020.2" y="503.4" width="9.4" height="6.2" rx="0.6" fill="#ececec"/>
 <circle cx="1024.9" cy="506.4" r="1" fill="#535353"/>
 <rect x="1106" y="498.5" width="28" height="11.5" fill="#444444" stroke="#4c4c4c" stroke-width="0.6"/>
 <rect x="1135" y="498.5" width="10" height="11.5" fill="#464646" stroke="#4c4c4c" stroke-width="0.6"/>
 <polyline points="1138.2,503.4 1140,505.2 1141.8,503.4" fill="none" stroke="#c0c0c0" stroke-width="0.9"/>

 <!-- layer list -->
 <rect x="929" y="658" width="321" height="43.5" fill="#696969"/>
 <g fill="#454545">
  <rect x="905" y="525" width="345" height="1.2"/><rect x="905" y="569.5" width="345" height="1.2"/><rect x="905" y="613.5" width="345" height="1.2"/><rect x="905" y="657.2" width="345" height="1.2"/>
  <rect x="928" y="517" width="1" height="184.5"/>
 </g>
 <rect x="905" y="701.4" width="359" height="1.6" fill="#3e3e3e"/>
 <!-- partial top thumb -->
 <rect x="932.8" y="516.8" width="43.2" height="4.7" fill="url(#ck)" stroke="#2e2e2e" stroke-width="0.5"/>
 <!-- eyes -->
 <g id="eyes" fill="#ececec">
  <path d="M911.6 548.8 C914 545.4 919.6 545.4 922 548.8 C919.6 552.2 914 552.2 911.6 548.8Z"/>
  <path d="M911.6 592.6 C914 589.2 919.6 589.2 922 592.6 C919.6 596 914 596 911.6 592.6Z"/>
  <path d="M911.6 636.6 C914 633.2 919.6 633.2 922 636.6 C919.6 640 914 640 911.6 636.6Z"/>
  <path d="M911.6 680.6 C914 677.2 919.6 677.2 922 680.6 C919.6 684 914 684 911.6 680.6Z"/>
 </g>
 <g fill="#4a4a4a"><circle cx="916.6" cy="548.8" r="2"/><circle cx="916.6" cy="592.6" r="2"/><circle cx="916.6" cy="636.6" r="2"/><circle cx="916.6" cy="680.6" r="2"/></g>
 
 <!-- jelen kopia thumb -->
 <rect x="932.8" y="530.6" width="43.2" height="35.2" fill="url(#ck)" stroke="#2e2e2e" stroke-width="0.6"/>
 <g id="minideer">
  <g transform="translate(932.8,530.6) scale(0.06526,0.06654) translate(-115,-145)">
   <use href="#bodyp" fill="#7a4a30"/>
   <use href="#antl" filter="url(#darken)"/>
   <use href="#headp" fill="#5a3a28"/>
  </g>
 </g>
 <!-- krajobraz clip arrow -->
 <path d="M950.5 590 V594.8 M950.5 590 H947.6 M948.6 593 L950.5 595 L952.4 593" fill="none" stroke="#e0e0e0" stroke-width="1"/>
 <!-- krajobraz thumb -->
 <rect x="954.7" y="574.2" width="43.5" height="35.8" fill="url(#ck)" stroke="#2e2e2e" stroke-width="0.6"/>
 <g clip-path="url(#kclip)">
  <rect x="955" y="574.5" width="41" height="28.2" fill="url(#skyr)"/>
  <rect x="962" y="586.5" width="26" height="2.6" fill="#c0b09a"/>
  <rect x="962" y="589" width="26" height="3.5" fill="#9a8c74"/>
  <g filter="url(#tb)">
   <path d="M955 574.5 H960 C962 578 965 582 966 586 C967 590 968 594 970 597 V603 H955Z" fill="#6e5a30"/>
   <path d="M996 574.5 H986 C984 580 984 586 983 592 L982 603 H996Z" fill="#463a20"/>
   <path d="M955 595 C962 592 972 593 980 594 C988 595 992 593 996 592 V603 H955Z" fill="#3a3020"/>
  </g>
  <g filter="url(#tb)"><circle cx="960.9" cy="588.6" r="1.7" fill="#c89a48"/><circle cx="960.9" cy="596.2" r="0.9" fill="#7a5a2a"/><circle cx="961.7" cy="590.4" r="1.6" fill="#6a5a30"/><circle cx="960.8" cy="577.7" r="1.3" fill="#9a7a3a"/><circle cx="963.2" cy="589.5" r="1.1" fill="#c89a48"/><circle cx="963.5" cy="590.0" r="0.9" fill="#6a5a30"/><circle cx="965.8" cy="575.6" r="0.7" fill="#8a6a30"/><circle cx="962.8" cy="594.2" r="1.1" fill="#5a4a28"/><circle cx="966.0" cy="587.5" r="1.4" fill="#c89a48"/><circle cx="955.1" cy="576.2" r="1.4" fill="#c89a48"/><circle cx="968.0" cy="599.9" r="1.6" fill="#9a7a3a"/><circle cx="958.3" cy="593.7" r="1.3" fill="#6a5a30"/><circle cx="955.9" cy="593.9" r="1.1" fill="#7a5a2a"/><circle cx="958.8" cy="575.7" r="0.7" fill="#9a7a3a"/><circle cx="955.0" cy="579.5" r="1.7" fill="#c89a48"/><circle cx="959.9" cy="592.4" r="1.2" fill="#5a4a28"/><circle cx="963.2" cy="594.2" r="1.0" fill="#6a5a30"/><circle cx="959.0" cy="574.4" r="1.2" fill="#6a5a30"/><circle cx="956.7" cy="592.4" r="0.7" fill="#c89a48"/><circle cx="965.4" cy="578.6" r="1.3" fill="#c89a48"/><circle cx="961.6" cy="599.6" r="1.5" fill="#c89a48"/><circle cx="963.4" cy="577.0" r="1.2" fill="#8a6a30"/><circle cx="955.0" cy="596.5" r="1.8" fill="#5a4a28"/><circle cx="959.0" cy="597.0" r="0.9" fill="#c89a48"/><circle cx="967.9" cy="589.7" r="1.3" fill="#6a5a30"/><circle cx="967.9" cy="579.5" r="1.0" fill="#7a5a2a"/><circle cx="962.9" cy="595.6" r="1.1" fill="#6a5a30"/><circle cx="956.2" cy="589.2" r="1.0" fill="#5a4a28"/><circle cx="959.8" cy="590.2" r="0.8" fill="#5a4a28"/><circle cx="961.3" cy="588.9" r="1.7" fill="#8a6a30"/><circle cx="963.2" cy="582.1" r="1.0" fill="#5a4a28"/><circle cx="958.2" cy="578.9" r="1.5" fill="#5a4a28"/><circle cx="957.6" cy="598.7" r="1.7" fill="#5a4a28"/><circle cx="956.0" cy="575.2" r="0.8" fill="#5a4a28"/><circle cx="967.5" cy="580.2" r="1.5" fill="#b88a3c"/><circle cx="960.5" cy="597.5" r="1.2" fill="#5a4a28"/><circle cx="957.3" cy="592.7" r="0.8" fill="#8a6a30"/><circle cx="961.2" cy="591.0" r="1.4" fill="#6a5a30"/><circle cx="958.6" cy="597.9" r="0.9" fill="#6a5a30"/><circle cx="955.9" cy="584.7" r="1.0" fill="#6a5a30"/><circle cx="957.3" cy="583.6" r="1.3" fill="#8a6a30"/><circle cx="956.2" cy="577.6" r="1.2" fill="#b88a3c"/><circle cx="963.5" cy="592.0" r="1.3" fill="#8a6a30"/><circle cx="962.7" cy="598.0" r="1.2" fill="#b88a3c"/><circle cx="964.1" cy="599.0" r="0.7" fill="#9a7a3a"/><circle cx="962.6" cy="576.9" r="0.6" fill="#7a6a3a"/><circle cx="970.0" cy="577.1" r="0.7" fill="#a07a3a"/><circle cx="962.4" cy="589.1" r="0.8" fill="#7a6a3a"/><circle cx="968.3" cy="588.8" r="0.6" fill="#a07a3a"/><circle cx="965.8" cy="577.1" r="0.9" fill="#7a6a3a"/><circle cx="968.9" cy="584.0" r="0.8" fill="#5a4a2a"/><circle cx="965.0" cy="576.2" r="0.4" fill="#7a6a3a"/><circle cx="967.1" cy="589.9" r="0.9" fill="#a07a3a"/><circle cx="964.6" cy="589.1" r="0.8" fill="#5a4a2a"/><circle cx="965.5" cy="587.7" r="0.5" fill="#a07a3a"/><circle cx="983.4" cy="590.8" r="1.2" fill="#3a3018"/><circle cx="995.4" cy="577.2" r="1.6" fill="#2e2616"/><circle cx="995.0" cy="581.2" r="0.7" fill="#6a5a30"/><circle cx="984.9" cy="591.1" r="1.3" fill="#6a5a30"/><circle cx="991.6" cy="586.4" r="1.7" fill="#6a5a30"/><circle cx="988.3" cy="581.0" r="1.4" fill="#3a3018"/><circle cx="994.4" cy="584.8" r="1.3" fill="#6a5a30"/><circle cx="985.7" cy="577.8" r="1.1" fill="#4e4024"/><circle cx="992.2" cy="600.6" r="1.0" fill="#3a3018"/><circle cx="984.5" cy="587.2" r="1.7" fill="#5a4a28"/><circle cx="988.0" cy="588.6" r="1.4" fill="#2e2616"/><circle cx="993.9" cy="601.5" r="1.2" fill="#4e4024"/><circle cx="993.8" cy="581.8" r="1.4" fill="#2e2616"/><circle cx="992.2" cy="590.0" r="1.0" fill="#8a7a40"/><circle cx="983.2" cy="577.8" r="1.2" fill="#4e4024"/><circle cx="993.0" cy="581.5" r="1.6" fill="#4e4024"/><circle cx="995.8" cy="577.2" r="0.8" fill="#8a7a40"/><circle cx="991.5" cy="596.6" r="1.8" fill="#2e2616"/><circle cx="985.6" cy="597.1" r="1.0" fill="#2e2616"/><circle cx="983.1" cy="587.2" r="1.5" fill="#3a3018"/><circle cx="985.9" cy="595.8" r="1.3" fill="#8a7a40"/><circle cx="989.5" cy="601.9" r="0.9" fill="#2e2616"/><circle cx="994.8" cy="576.4" r="1.7" fill="#2e2616"/><circle cx="988.0" cy="586.6" r="0.9" fill="#4e4024"/><circle cx="987.9" cy="589.9" r="1.7" fill="#6a5a30"/><circle cx="989.0" cy="592.2" r="0.9" fill="#2e2616"/><circle cx="994.3" cy="596.4" r="1.7" fill="#4e4024"/><circle cx="985.8" cy="599.2" r="1.8" fill="#6a5a30"/><circle cx="990.0" cy="596.1" r="1.1" fill="#2e2616"/><circle cx="994.1" cy="583.8" r="0.8" fill="#5a4a28"/><circle cx="987.4" cy="585.8" r="1.0" fill="#4e4024"/><circle cx="985.8" cy="598.3" r="1.2" fill="#4e4024"/><circle cx="985.2" cy="583.4" r="1.6" fill="#3a3018"/><circle cx="989.1" cy="602.0" r="1.7" fill="#8a7a40"/><circle cx="993.9" cy="593.3" r="1.7" fill="#5a4a28"/><circle cx="990.5" cy="593.3" r="1.5" fill="#5a4a28"/><circle cx="989.8" cy="582.1" r="1.5" fill="#2e2616"/><circle cx="985.1" cy="588.4" r="1.7" fill="#6a5a30"/><circle cx="987.1" cy="584.7" r="1.6" fill="#8a7a40"/><circle cx="985.7" cy="597.8" r="1.8" fill="#8a7a40"/><circle cx="966.2" cy="598.0" r="1.0" fill="#2e2818"/><circle cx="975.6" cy="599.1" r="0.6" fill="#3e3420"/><circle cx="976.2" cy="597.0" r="1.4" fill="#2e2818"/><circle cx="975.1" cy="599.9" r="0.7" fill="#303020"/><circle cx="972.0" cy="602.6" r="1.5" fill="#c0a040"/><circle cx="965.1" cy="597.9" r="0.9" fill="#303020"/><circle cx="976.5" cy="594.1" r="1.0" fill="#3e3420"/><circle cx="992.9" cy="594.3" r="1.4" fill="#3e3420"/><circle cx="956.5" cy="594.6" r="0.6" fill="#c0a040"/><circle cx="968.2" cy="596.6" r="1.2" fill="#2e2818"/><circle cx="975.5" cy="598.8" r="1.5" fill="#c0a040"/><circle cx="984.4" cy="600.0" r="1.5" fill="#3e3420"/><circle cx="970.4" cy="597.1" r="1.1" fill="#5a4a28"/><circle cx="977.1" cy="601.6" r="1.1" fill="#a89030"/><circle cx="976.7" cy="601.5" r="1.2" fill="#5a4a28"/><circle cx="964.5" cy="600.4" r="1.4" fill="#5a4a28"/><circle cx="968.0" cy="596.1" r="1.5" fill="#a89030"/><circle cx="986.9" cy="594.9" r="0.7" fill="#a89030"/><circle cx="960.4" cy="593.9" r="1.0" fill="#4a4024"/><circle cx="989.1" cy="597.2" r="1.4" fill="#5a4a28"/><circle cx="963.2" cy="599.3" r="1.4" fill="#2e2818"/><circle cx="963.2" cy="599.8" r="1.5" fill="#6a5a30"/><circle cx="959.7" cy="598.1" r="1.4" fill="#a89030"/><circle cx="987.9" cy="597.8" r="0.6" fill="#303020"/><circle cx="961.0" cy="594.8" r="0.8" fill="#5a4a28"/><circle cx="995.6" cy="602.3" r="0.7" fill="#3e3420"/><circle cx="960.5" cy="599.8" r="0.7" fill="#2e2818"/><circle cx="968.4" cy="597.7" r="1.1" fill="#4a4024"/><circle cx="963.6" cy="596.7" r="1.2" fill="#3e3420"/><circle cx="989.6" cy="594.8" r="1.1" fill="#6a5a30"/><circle cx="971.6" cy="595.0" r="0.8" fill="#3e3420"/><circle cx="968.3" cy="593.8" r="1.4" fill="#4a4024"/><circle cx="978.4" cy="594.9" r="1.2" fill="#6a5a30"/><circle cx="988.0" cy="595.6" r="1.5" fill="#5a4a28"/><circle cx="988.4" cy="597.1" r="1.5" fill="#6a5a30"/><circle cx="986.5" cy="600.7" r="1.0" fill="#5a4a28"/><circle cx="957.9" cy="596.4" r="1.1" fill="#3e3420"/><circle cx="991.4" cy="602.9" r="1.5" fill="#3e3420"/><circle cx="964.5" cy="602.4" r="1.3" fill="#6a5a30"/><circle cx="963.9" cy="597.1" r="0.8" fill="#2e2818"/><circle cx="971.0" cy="603.0" r="1.2" fill="#2e2818"/><circle cx="986.2" cy="602.8" r="0.6" fill="#2e2818"/><circle cx="985.3" cy="595.6" r="1.0" fill="#3e3420"/><circle cx="986.2" cy="599.5" r="0.6" fill="#c0a040"/><circle cx="965.3" cy="602.1" r="1.2" fill="#4a4024"/><circle cx="994.7" cy="598.7" r="1.6" fill="#303020"/><circle cx="988.2" cy="593.8" r="1.2" fill="#3e3420"/><circle cx="970.8" cy="602.4" r="1.0" fill="#5a4a28"/><circle cx="990.1" cy="598.4" r="1.2" fill="#4a4024"/><circle cx="993.8" cy="597.2" r="1.1" fill="#c0a040"/><circle cx="970.0" cy="595.9" r="1.3" fill="#c0a040"/><circle cx="982.2" cy="600.5" r="0.6" fill="#a89030"/><circle cx="979.0" cy="599.3" r="1.0" fill="#4a4024"/><circle cx="957.2" cy="596.2" r="1.0" fill="#6a5a30"/><circle cx="958.0" cy="602.1" r="1.0" fill="#303020"/><circle cx="965.3" cy="600.6" r="0.6" fill="#2e2818"/><circle cx="993.4" cy="600.2" r="1.1" fill="#a89030"/><circle cx="979.7" cy="594.2" r="1.2" fill="#303020"/><circle cx="959.8" cy="601.6" r="1.0" fill="#5a4a28"/><circle cx="960.1" cy="597.4" r="1.3" fill="#303020"/><circle cx="979.6" cy="599.4" r="1.3" fill="#6a5a30"/><circle cx="986.9" cy="598.3" r="1.6" fill="#c0a040"/><circle cx="985.1" cy="595.4" r="0.7" fill="#c0a040"/><circle cx="987.2" cy="599.2" r="1.0" fill="#c0a040"/><circle cx="980.0" cy="600.3" r="1.3" fill="#a89030"/><circle cx="981.0" cy="600.5" r="0.8" fill="#a89030"/><circle cx="975.6" cy="599.5" r="0.8" fill="#3e3420"/><circle cx="980.8" cy="593.1" r="0.9" fill="#3e3420"/><circle cx="980.6" cy="594.0" r="1.1" fill="#2e2818"/><circle cx="986.0" cy="602.1" r="0.8" fill="#a89030"/></g>
  <path d="M988.5 574 L990 585 L987.5 601" stroke="#2a2014" stroke-width="1.3" fill="none"/>
 </g>
 <!-- jelen row -->
 <rect x="932.6" y="618.6" width="43.4" height="35.4" fill="url(#ck)" stroke="#2e2e2e" stroke-width="0.6"/>
 <use href="#minideer" transform="translate(0,88)"/>
 <g fill="none" stroke="#e0e0e0" stroke-width="1"><rect x="980.4" y="631.2" width="4" height="5.2" rx="2"/><rect x="980.4" y="637" width="4" height="5.2" rx="2"/></g>
 <rect x="989.6" y="618.6" width="43.6" height="35.4" fill="#ffffff" stroke="#2e2e2e" stroke-width="0.6"/>
 <path d="M1003.5 632 L1008 631.2 L1010 632.5 L1008.6 633.8 L1004.5 634Z M1010.8 631.2 L1012.6 631.4 L1012 632.8Z" fill="#222"/>
 <rect x="1040.4" y="640.6" width="19.2" height="0.8" fill="#d8d8d8"/>
 <!-- jelen_tlo row -->
 <rect x="932" y="662.4" width="44.3" height="36.2" fill="url(#ck)"/>
 <rect x="932" y="686.6" width="44.3" height="12" fill="url(#gnd)"/><path d="M932 686.6 L976.3 686.6 L976.3 688 L932 688Z" fill="#d8d2c8"/>
 <g fill="none" stroke="#c8c8c8" stroke-width="0.9">
  <path d="M930.5 700.5 V660.5 H946 M962 660.5 H977.8 V700.5 M930.5 700.5 H946 M962 700.5 H977.8"/>
 </g>
 <g fill="none" stroke="#e0e0e0" stroke-width="1"><rect x="980.4" y="675.2" width="4" height="5.2" rx="2"/><rect x="980.4" y="681" width="4" height="5.2" rx="2"/></g>
 <rect x="989.6" y="662.6" width="43.6" height="35.8" fill="#ffffff" stroke="#2e2e2e" stroke-width="0.6"/>
 <path d="M989.9 684.5 L993 683.5 L996 685 L1000 684.8 L1004 685.6 L1010 685.4 L1016 685.8 L1022 685.2 L1026 684.4 L1030 682.5 L1033 681.5 V698.2 H989.9Z" fill="#000" filter="url(#tb)"/>
 <path d="M1000 685.4 H1022" stroke="#bdbdbd" stroke-width="0.7"/>
 <!-- layers scrollbar -->
 <rect x="1250.5" y="518" width="11.5" height="183.4" fill="#4a4a4a"/>
 <rect x="1252.3" y="552" width="8" height="110" fill="#686868"/>
 <polyline points="1253.8,526.6 1256.1,524.4 1258.4,526.6" fill="none" stroke="#9a9a9a" stroke-width="0.9"/>
 <polyline points="1253.8,692.2 1256.1,694.4 1258.4,692.2" fill="none" stroke="#9a9a9a" stroke-width="0.9"/>
 <!-- bottom toolbar -->
 <g fill="none" stroke="#a8a8a8" stroke-width="1.1"><rect x="1100.2" y="710.4" width="5.6" height="4" rx="2"/><rect x="1105.8" y="710.4" width="5.6" height="4" rx="2"/></g>
 <text x="1123" y="717.4" font-family="Liberation Sans" font-style="italic" font-size="10.5" fill="#e4e4e4">fx</text>
 <rect x="1133" y="717.8" width="1.6" height="1.2" fill="#f0f0f0"/><rect x="1176.3" y="717.8" width="1.6" height="1.2" fill="#f0f0f0"/>
 <rect x="1143.6" y="709" width="10.8" height="8.4" fill="#e4e4e4"/>
 <circle cx="1149" cy="713.2" r="2.2" fill="#535353"/>
 <circle cx="1170.6" cy="713.4" r="4.2" fill="none" stroke="#e4e4e4" stroke-width="1.1"/>
 <path d="M1173.6 710.4 A4.2 4.2 0 0 1 1167.6 716.4Z" fill="#e4e4e4"/>
 <path d="M1187.2 709 H1191.4 L1192.6 710.2 H1198 V718 H1187.2Z" fill="#e4e4e4"/>
 <rect x="1209.8" y="708.8" width="9.4" height="9.6" fill="none" stroke="#e4e4e4" stroke-width="1.1"/>
 <path d="M1214.5 711 V716.4 M1211.8 713.7 H1217.2" stroke="#e4e4e4" stroke-width="1.3"/>
 <path d="M1231.5 710.2 H1240 M1234 710.2 V708.8 H1237.5 V710.2 M1232.6 711.6 V718.6 H1239 V711.6 M1234.8 712.6 V717.4 M1236.8 712.6 V717.4" fill="none" stroke="#e4e4e4" stroke-width="1"/>
</svg>

<!-- document -->
<div class="a" style="left:115px;top:145px;width:662px;height:529px;background:#fff"></div>


<!-- ===== SVG overlay: chrome icons ===== -->
<svg width="1323" height="719" style="left:0;top:0">
 <!-- PS logo -->
 <rect x="39" y="68" width="11" height="11" rx="1.5" fill="#001e36"/>
 <text x="40.8" y="76.2" font-family="Liberation Sans" font-size="6.6" fill="#31a8ff">Ps</text>
 <!-- window controls -->
 <g stroke="#4c4c4c" stroke-width="1"><line x1="1180.5" y1="65" x2="1180.5" y2="82"/><line x1="1202.5" y1="65" x2="1202.5" y2="82"/><line x1="1223.5" y1="65" x2="1223.5" y2="82"/></g>
 <rect x="1186" y="72.5" width="9" height="2" fill="#c8c8c8"/>
 <g fill="none" stroke="#c8c8c8" stroke-width="1.4"><rect x="1211.5" y="67.9" width="6.5" height="5.5"/><rect x="1208.5" y="70.9" width="6.5" height="5.5" fill="#535353"/></g>
 <g stroke="#d0d0d0" stroke-width="1.7"><line x1="1239.5" y1="68.5" x2="1247" y2="75.2"/><line x1="1247" y1="68.5" x2="1239.5" y2="75.2"/></g>

 <!-- options bar -->
 <path d="M50 98.3 L56.6 91.6 L63.2 98.3 L61.5 98.3 L61.5 104 L58.2 104 L58.2 100.3 L55 100.3 L55 104 L51.7 104 L51.7 98.3 Z" fill="#ececec"/>
 <g stroke="#3f3f3f" stroke-width="1"><line x1="76.5" y1="88" x2="76.5" y2="107"/><line x1="116.5" y1="88" x2="116.5" y2="107"/><line x1="270.5" y1="88" x2="270.5" y2="107"/><line x1="385.5" y1="88" x2="385.5" y2="107"/><line x1="487.5" y1="88" x2="487.5" y2="107"/><line x1="590.5" y1="88" x2="590.5" y2="107"/><line x1="624.5" y1="88" x2="624.5" y2="107"/></g>
 <!-- move icon -->
 <g id="mv" stroke="#ececec" stroke-width="1.3" fill="none"><line x1="84.5" y1="97.5" x2="95.5" y2="97.5"/><line x1="90" y1="92" x2="90" y2="103"/></g>
 <g fill="#ececec"><path d="M90 91.2 L92.2 93.8 L87.8 93.8Z"/><path d="M90 103.8 L92.2 101.2 L87.8 101.2Z"/><path d="M83.8 97.5 L86.4 95.3 L86.4 99.7Z"/><path d="M96.2 97.5 L93.6 95.3 L93.6 99.7Z"/></g>
 <polyline points="104.3,98.6 106.5,100.8 108.7,98.6" fill="none" stroke="#c8c8c8" stroke-width="0.9"/>
 <!-- checkbox 1 -->
 <rect x="123" y="94" width="8" height="8" rx="1.5" fill="#e2e2e2"/>
 <polyline points="124.6,97.9 126.4,99.9 129.5,95.9" fill="none" stroke="#2e2e2e" stroke-width="1.4"/>
 <!-- dropdown Warstwa -->
 <rect x="212" y="91.5" width="50" height="13.5" fill="#434343"/>
 <polyline points="255,98.6 256.9,100.5 258.8,98.6" fill="none" stroke="#c8c8c8" stroke-width="0.9"/>
 <!-- checkbox 2 -->
 <rect x="278" y="94" width="8" height="8" rx="1.5" fill="#e2e2e2"/>
 <polyline points="279.6,97.9 281.4,99.9 284.5,95.9" fill="none" stroke="#2e2e2e" stroke-width="1.4"/>
 <!-- align icons -->
 <g fill="#b9b9b9">
  <rect x="396" y="92" width="1" height="12"/><rect x="398" y="94.2" width="5.6" height="2.8"/><rect x="398" y="99.2" width="8" height="3"/>
  <rect x="422" y="92" width="1" height="12"/><rect x="420" y="94.2" width="5.2" height="2.8"/><rect x="418" y="99.2" width="9" height="3"/>
  <rect x="447.3" y="92" width="1" height="12"/><rect x="441" y="94.2" width="5" height="2.8"/><rect x="437.6" y="99.2" width="8.4" height="3"/>
  <rect x="464" y="93.3" width="13" height="1"/><rect x="466" y="96.2" width="9" height="2.8"/><rect x="464" y="101" width="13" height="1"/>
  <rect x="499" y="93" width="11.5" height="1"/><rect x="499.8" y="93.4" width="4" height="9.3"/><rect x="505.7" y="93.4" width="3.5" height="6.4"/>
  <rect x="520" y="97.5" width="11.3" height="1"/><rect x="521.4" y="93.4" width="3.5" height="8.3"/><rect x="526.8" y="95" width="3.2" height="5.7"/>
  <rect x="542" y="92" width="3" height="9.2"/><rect x="547" y="95" width="3" height="6.2"/><rect x="540.6" y="102" width="11.3" height="1"/>
  <rect x="569.5" y="91.5" width="1" height="12.5" fill="#8e8e8e"/><rect x="572" y="93" width="3" height="8.7"/><rect x="577" y="91.5" width="1" height="12.5"/>
 </g>
 <g fill="#ececec"><circle cx="603.8" cy="97.8" r="1.6"/><circle cx="608.7" cy="97.8" r="1.6"/><circle cx="613.4" cy="97.8" r="1.6"/></g>
 <!-- 3D icons -->
 <g fill="none" stroke="#a4a4a4" stroke-width="1">
  <circle cx="685.5" cy="96" r="3.2"/>
  <path d="M682 95.5 C678.5 96 677.5 98.5 679.5 100.5 C681.5 102 686 102.3 690.5 100.5"/>
  <path d="M690.5 100.5 L688.6 99.4 M690.5 100.5 L689.2 102.2"/>
  <path d="M701.2 92.9 A6 6 0 1 1 699.2 95.2"/><circle cx="704.6" cy="97.8" r="2.8"/>
  <path d="M726.2 93.5 V102 M722 97.8 H730.5 M724.3 93.5 L726.2 91.2 L728.1 93.5Z M724.3 102 L726.2 104.3 L728.1 102Z M722 95.9 L719.7 97.8 L722 99.7Z M730.5 95.9 L732.8 97.8 L730.5 99.7Z" stroke-linejoin="round"/>
  <path d="M746.4 91.5 V104 M739.5 97.8 H753.3"/>
  <circle cx="746.4" cy="97.8" r="2.6" fill="#535353"/>
  <path d="M775 93.5 L769.5 97.8 L775 102"/>
 </g>
 <g fill="#a4a4a4">
  <path d="M680 100 L683.5 100.5 L680.5 103Z"/>
  <path d="M698.3 92.3 L702.6 92.4 L699.6 95.8Z"/>

  <path d="M746.4 91 L748.5 93.5 L744.3 93.5Z M746.4 104.5 L748.5 102 L744.3 102Z M739 97.8 L741.5 95.7 L741.5 99.9Z M753.8 97.8 L751.3 95.7 L751.3 99.9Z"/>
  <rect x="760.3" y="94.3" width="8" height="7" rx="1"/>
 </g>
 <!-- right side of options bar -->
 <g fill="none" stroke="#e6e6e6" stroke-width="1.3">
  <circle cx="1188.8" cy="97" r="4.3"/><line x1="1192" y1="100.2" x2="1195.6" y2="103.6"/>
  <rect x="1206.5" y="93.3" width="13.3" height="10" stroke="#d4d4d4" stroke-width="1.2"/>
  <rect x="1208.5" y="95.3" width="2" height="6" stroke="#d4d4d4" stroke-width="0.8"/>
  <path d="M1244 96.5 V103.3 H1257 V96.5 M1250.5 100 V91.3 M1247.8 94 L1250.5 91.3 L1253.2 94" stroke-width="1.5"/>
 </g>
 <polyline points="1228.6,98.2 1230.9,100.3 1233.2,98.2" fill="none" stroke="#c8c8c8" stroke-width="0.9"/>
 <!-- header strip chevrons -->
 <g fill="none" stroke="#d8d8d8" stroke-width="0.9">
  <path d="M896.5 113.2 L894.3 115.3 L896.5 117.4 M898.9 113.2 L896.7 115.3 L898.9 117.4"/>
  <path d="M1253.8 113.2 L1256 115.3 L1253.8 117.4 M1256.2 113.2 L1258.4 115.3 L1256.2 117.4"/>
 </g>
</svg>


<!-- ===== document content: deer ===== -->
<svg width="1323" height="719" style="left:0;top:0">
 <defs>
  <clipPath id="docclip"><rect x="115" y="145" width="662" height="529"/></clipPath>
  <path id="bodyp" d="M334.6 376.5 C338 366 343 360 350 357.5 C360 354 370 353 378.4 353.1 C388 353.5 395 355 401.6 355.4 C412 356 422 359 432.5 359 C442 359 450 357.5 456 357.2 C467 356.8 478 356 487 355.4 C495 354.5 502 351.5 509 349 L512 345 L537 345 L538 354 C537 358 535.5 362 534.5 366 C533.5 369 532.8 371.5 532.6 374 C533.6 377 534.6 380 534.5 383.4 C534 389 532.5 394 530 398 C527 402 523 406 518 408.5 C514 410.5 511 411.5 507 413.5 C503 415.5 500.5 417.6 498 420 C495.5 422.5 493.5 425 492 428 L490.3 434 C489 440 488 445 487.5 452 C487 458 486.8 462 487 466.7 C487.5 480 488.5 492 489.5 503.5 C490 507 491 509 492 510 C495 511.5 498 513 498.7 515.5 C494 516.3 489 516.4 485.3 516 C484.6 512 484 508 483.6 505 C483 492 482.5 480 482 470 C481.5 462 480.5 456 479 452 C477.5 452.5 476 453 474.4 453.4 C474 470 473.3 488 472.8 503.5 C473.5 506 474.5 508.5 476 510 C478.5 512 481 514 482 516.5 C478 517 473 517 469.4 516.5 C467.5 512 465.5 508 464.4 503.5 C465 492 465.7 482 466 473.4 C465.5 463 464.5 455 463 450 C462 445 460.8 440 459.4 437 C455 437.5 450 437.8 445 438 C438 439 432 441 425 441.6 C417 442 408 441.5 400 440 C394 438 390 435 388 432 C385 429.5 382.5 427 380 425 C376 427.5 372 430 370 432 C368.5 433.5 367.5 435 366.8 436.7 C365.5 446 364 455 363.4 465 C366 478 370 491 373.4 503.5 C375 506 376.5 507.5 378 508 C380.5 509.5 382.3 511 382.6 512.7 C378 513.6 374 513.8 370 513.5 C368.5 510 366.5 506.5 365 503.5 C361.5 493 358 483 355 473.4 C353 468 351 463.5 349 460 C346 463 343 466.5 341 470 C340.8 482 341.2 495 341.7 506.8 C342.5 509 343.2 510 344 511 C346 512.5 347.8 514 348.4 516 C343 516.3 338 516 333.4 515 C331.5 511.5 330 508 329.2 505 C330.5 492 332 478 333.4 465 C333 459 332.3 452 331.7 446.7 C336 440 341 435 345 432 C348 428 350.5 424 351.7 420 C352.2 416 352.3 413 352 410 C349.5 405 346.5 400.5 343.6 396.2 C341.5 392 339.5 387.5 338 383.7 C336.8 381 335.5 378.5 334.6 376.5 Z"/>
  <clipPath id="bodyclip"><use href="#bodyp"/></clipPath>
  <linearGradient id="bodyg" x1="0" y1="0" x2="1" y2="0">
   <stop offset="0" stop-color="#7a3c24"/><stop offset="0.45" stop-color="#8c4a2a"/><stop offset="0.6" stop-color="#a8742e"/><stop offset="0.85" stop-color="#b27c2e"/><stop offset="1" stop-color="#96602a"/>
  </linearGradient>
  <linearGradient id="antg" x1="0" y1="0" x2="0" y2="1">
   <stop offset="0" stop-color="#ead6c2"/><stop offset="0.55" stop-color="#e0c4a6"/><stop offset="1" stop-color="#c4a282"/>
  </linearGradient>
  <filter id="blur1" x="-20%" y="-80%" width="140%" height="260%"><feGaussianBlur stdDeviation="1"/></filter>
  <filter id="blur2" x="-20%" y="-80%" width="140%" height="260%"><feGaussianBlur stdDeviation="2.5"/></filter>
  <filter id="soft" x="-5%" y="-5%" width="110%" height="110%"><feGaussianBlur stdDeviation="0.4"/></filter>
  <filter id="soft2" x="-10%" y="-10%" width="120%" height="120%"><feGaussianBlur stdDeviation="1.3"/></filter>
  <filter id="tex" x="0" y="0" width="100%" height="100%">
   <feTurbulence type="fractalNoise" baseFrequency="0.18" numOctaves="2" seed="7" result="n"/>
   <feColorMatrix in="n" type="matrix" values="0 0 0 0 0  0 0 0 0 0  0 0 0 0 0  0 0 0 1.6 -0.55"/>
  </filter>
  <filter id="texl" x="0" y="0" width="100%" height="100%">
   <feTurbulence type="fractalNoise" baseFrequency="0.2" numOctaves="2" seed="3" result="n"/>
   <feColorMatrix in="n" type="matrix" values="0 0 0 0 1  0 0 0 0 0.95  0 0 0 0 0.9  0 0 0 1.8 -0.85"/>
  </filter>
 </defs>
 <g clip-path="url(#docclip)">
 <!-- ground shadow -->
 <path d="M236 511.5 L645 511.5 L642 514 L625 516.5 L605 518.5 L588 518 L565 520.5 L540 519.5 L522 522 L505 526 L490 530 L470 533.5 L440 534 L410 535 L385 534.5 L365 531 L345 527.5 L320 524 L300 521.5 L280 518 L260 516 L236 513.5Z" fill="#dedbd5" filter="url(#blur1)"/>
 <path d="M292 511.5 L522 511.5 L523 515 L510 519 L492 524 L470 529 L450 532 L425 532.5 L400 533 L380 531.5 L360 527 L335 522 L312 518 L298 514.5Z" fill="#cdc9c1" filter="url(#blur1)"/>
 <path d="M325 513 L500 513 L488 518 L468 523 L440 527 L400 528 L372 524 L348 518Z" fill="#c2beb5" filter="url(#blur1)"/>
 <g fill="#f6f5f2" opacity="0.8">
  <path d="M300 528 C330 536 360 541 390 546 C420 549 470 547 520 540 C560 534 600 529 650 525 C600 533 560 540 520 547 C470 553 420 555 380 550 C350 545 320 536 300 528Z" filter="url(#blur2)"/>
 </g>
 <g filter="url(#soft)">
 <use href="#bodyp" fill="url(#bodyg)"/>
 <g clip-path="url(#bodyclip)">
  <!-- golden forest -->
  <path d="M426 407 C434 402 441 394 447 386 C454 377 464 368 477 362 C489 357 504 352 519 352 L545 360 L540 442 L418 444 C418 432 422 414 426 407Z" fill="#b27a2c"/>
  <path d="M486 356 C496 354 506 352 516 351 L536 356 L534 380 C524 374 512 368 500 364 C494 362 489 359 486 356Z" fill="#8e5c2e"/>
  <path d="M448 392 C458 382 470 376 484 372 C494 370 504 374 512 380 C502 386 492 394 482 400 C470 406 456 406 448 392Z" fill="#c08c34" opacity="0.8"/>
  <path d="M434 410 C446 404 458 402 470 404 C480 406 488 410 494 416 C482 424 466 428 452 428 C442 426 434 420 434 410Z" fill="#c4922e" opacity="0.75"/>
  <path d="M492 400 C502 394 512 392 522 394 L526 402 C516 410 504 416 494 418 C488 414 488 406 492 400Z" fill="#a87430" opacity="0.8"/>
  <path d="M512 376 C520 378 528 380 534 384 L532 396 C524 394 516 388 512 376Z" fill="#b4803a" opacity="0.8"/>
  <path d="M420 418 C440 420 460 422 476 424 C484 425 490 426 494 428 L492 440 C470 442 445 442 420 440Z" fill="#8e4e2c" opacity="0.9"/>
  <path d="M430 424 C445 425 458 427 470 430 C460 432 445 431 430 424Z" fill="#c09070" opacity="0.6"/>
  <path d="M462 418 C470 414 480 414 492 418 L494 430 C484 432 472 430 462 426Z" fill="#b8822e" opacity="0.85"/>

  <!-- rock band / hind -->
  <path d="M330 376 C340 386 352 394 366 400 C380 407 396 414 410 420 C428 426 446 430 462 434 L462 446 L400 446 L385 432 L370 438 L340 470 L320 470Z" fill="#7e3e26"/>
  <path d="M344 392 C356 398 370 404 384 410 C398 416 410 422 420 428 C410 430 398 428 386 424 C372 418 358 410 346 402Z" fill="#93502e" opacity="0.85"/>
  <path d="M362 412 C376 417 390 423 402 430 C392 432 380 428 370 424Z" fill="#b47a5a" opacity="0.7"/>
  <path d="M398 423 C412 426 428 430 444 434 C430 437 414 436 402 432Z" fill="#b0725a" opacity="0.7"/>
  <path d="M340 382 C345 392 349 401 352 412 C346 404 342 395 340 382Z" fill="#a86c48" opacity="0.7"/>
  <path d="M420 436 C432 434 446 434 458 436 L458 442 C446 442 432 442 420 436Z" fill="#c4964c" opacity="0.6"/>
  <!-- legs darkening -->
  <path d="M325 452 C335 444 348 438 358 436 L362 520 L325 520Z" fill="#623422" opacity="0.9"/>
  <path d="M349 452 L370 436 L386 520 L350 520Z" fill="#5e3222" opacity="0.88"/>
  <path d="M456 440 L478 438 L484 520 L456 520Z" fill="#4e3022" opacity="0.92"/>
  <path d="M476 440 L494 436 L500 520 L476 520Z" fill="#5e3c24" opacity="0.9"/>
  <path d="M483 452 C486 465 488 480 489 500 L485 500 C484 485 483 470 483 452Z" fill="#b88a30" opacity="0.8"/>
  <path d="M484.5 470 C486 475 487 480 487 486 C485.5 484 485 478 484.5 470Z" fill="#d0a030" opacity="0.8"/>
  <path d="M467 456 C469 468 470 480 470 492 L468 492 C467.5 480 467 468 467 456Z" fill="#8a5a34" opacity="0.6"/>
  <path d="M333 462 C337 468 339 474 337 481 C334 477 333 470 333 462Z" fill="#b07a52" opacity="0.6"/>
  <path d="M358 470 C361 476 363 482 364 488 C361 486 359 478 358 470Z" fill="#9a5a3a" opacity="0.6"/>
  <path d="M343 440 C350 436 356 434 362 434 C358 440 352 444 343 446Z" fill="#8a4a2e" opacity="0.7"/>
  <path d="M329 506 C333 508 342 508 344 510 C347 512 348.5 514 348.4 516.5 C343 517 337 516.5 333 515.5Z" fill="#3a2219"/>
  <path d="M365.5 504.5 C369 506 373 506 376 507 C379 509 382.5 511 382.8 513 C378 514 373.5 514 370 513.8Z" fill="#3a2219"/>
  <path d="M464.5 504 C468 505.5 472 505.5 475 508 C478 510 481.5 513 482.2 517 C477 517.5 472.5 517.5 469.4 517Z" fill="#36231a"/>
  <path d="M483.5 504 C487 505 490 506 492 509 C495 511 498.5 513 498.8 516 C494 516.8 489 516.8 485.3 516.4Z" fill="#36231a"/>
  <!-- texture -->
  <rect x="320" y="340" width="230" height="190" filter="url(#tex)" opacity="0.25"/>
  <!-- snow landscape on back -->
  <path d="M330 372 C336 362 345 357 356 354.5 C375 352 400 354 430 358 C450 359.5 470 357 490 355.5 L492 358 C482 362 472 366 466 371 C458 378 452 386 446 392 C440 398 434 402 428 405 C420 408 412 410 404 409 C396 408 390 406 384 404 C374 400 366 397 358 393 C350 389 342 382 330 372Z" fill="#efe6de"/>
  <path d="M334 366 C342 358 352 355 366 354 C382 353 398 355 412 358 C426 361 440 362 456 360 C466 359 476 358 488 356 L490 360 C476 363 462 364 448 365 C436 366 424 366 412 364 C396 362 382 362 368 364 C356 366 344 368 334 366Z" fill="#d8b796"/>
  <path d="M338 362 C350 357 364 356 378 356.5 C370 360 356 362 338 362Z" fill="#d8b694"/>
  <path d="M342 374 C352 371 364 372 376 375 C368 378 354 378 342 374Z" fill="#d0aa86" opacity="0.4"/>
  <path d="M384 371 C394 368 402 370 408 373 C400 376 390 375 384 371Z" fill="#c49a74" opacity="0.4"/>
  <path d="M356 384 C370 382 382 384 392 389 C382 392 366 390 356 384Z" fill="#cca47e" opacity="0.4"/>
  <path d="M420 370 C432 367 444 368 456 369 C446 374 432 375 420 370Z" fill="#d2ae8a" opacity="0.4"/>
  <path d="M376 396 C384 394 392 396 398 400 C390 402 382 400 376 396Z" fill="#c8a07c" opacity="0.4"/>
  <path d="M430 386 C436 384 442 385 446 388 C440 392 434 391 430 386Z" fill="#b89068" opacity="0.4"/>
  <!-- person -->
  <path d="M404 386 C406 383 409 382 413 382 C417 381.5 421 381.5 423.5 383 C426.5 385.5 428.5 389 429.2 393.5 C430 398 430.6 402 431.2 406 C433.5 409.5 437 412.5 440 415.3 L443 420 C430 423 412 421 400 417 L400 408 C400.2 402 400.4 396 400.8 391.7 C401.5 389 402.5 387.5 404 386Z" fill="#9c4c2a"/>
  <circle cx="414" cy="376.5" r="5" fill="#8a4426"/>
  <path d="M408 374 C410 370.5 418 370.5 420 374 C417 372.8 411 372.8 408 374Z" fill="#7a3a22"/>
  <path d="M407 389 C411 386 416 387 419 391 C421 397 420 404 416 410 C411 405 407 398 407 389Z" fill="#b4623a" opacity="0.7"/>
  <path d="M422 394 C426 398 429 405 432 412 C427 412 423 408 421 402Z" fill="#7a3a22" opacity="0.6"/>
 </g>
 <!-- neck shading -->
 <g clip-path="url(#bodyclip)">
  <path d="M482 358 C492 354 502 350 512 348 L537 350 C537 362 535 372 534 384 C532 394 528 402 522 410 C512 404 502 396 494 386 C486 376 482 366 482 358Z" fill="#8e5a2e" opacity="0.8" filter="url(#soft2)"/>
  <path d="M510 352 L536 352 C536 364 534 376 532 388 C526 384 518 376 512 366Z" fill="#6e4428" opacity="0.7" filter="url(#soft2)"/>
  <path d="M516 378 C524 380 530 382 533 386 C532 394 528 402 524 407 C520 398 517 390 516 378Z" fill="#b4843a" opacity="0.6"/>
 </g>
 <!-- birds -->
 <g fill="none" stroke="#5e4a3c" stroke-width="0.6"><path d="M436 345.4 L437 346 L438 345.4"/><path d="M445 348.4 L446 349 L447 348.4"/><path d="M451 343.4 L452 344 L453 343.4"/><path d="M457 350.4 L458 351 L459 350.4"/><path d="M462 345.4 L463 346 L464 345.4"/><path d="M467 339.4 L468 340 L469 339.4"/><path d="M448 354.4 L449 355 L450 354.4"/><path d="M440 351.4 L441 352 L442 351.4"/><path d="M454 339.4 L455 340 L456 339.4"/></g>
 <!-- antlers -->
 <g id="antl" fill="url(#antg)">
  <path d="M505 339 L497.5 335 L492.5 328.8 L485 322.5 L476.3 312.5 L468.8 302.5 L466 296 L462.5 287.5 L459 283 L456.9 278.8 L457.5 272 L460 267.5 L462.5 265.6 L466 263.8 L469 264 L471.3 266.3 L471 272 L470.5 278 L471 284 L473 290 L475 296.3 L478.5 303 L482.5 308.8 L487 313.5 L491.3 317.5 L496 320.5 L500 322.5 L505 325 L512.5 328.8 L520 333.8 L526 337 L518 342Z"/>
  <path d="M498.5 323.5 L501.5 317 L503 313.5 L504.6 313 L506 315.5 L508.5 320.5 L511 327Z"/>
  <path d="M530 340 L537 336 L545 332.5 L557.5 326.3 L565 322 L573.8 318.8 L578 313 L582.5 307.5 L588 300 L593.8 292.5 L597 286 L599.4 278.8 L596 273.5 L593 270 L591 266 L588.8 265 L586.5 265.5 L585.6 268.8 L586 274 L586.3 280 L585 287 L582.5 296.3 L578 303 L570 312.5 L560 316.3 L553 319 L547.5 321.3 L542.5 325 L536 330 L528 336Z"/>
  <path d="M576.5 304 L578 291 L578.8 284.5 L580.3 285.3 L582 294 L583.5 302Z"/>
  <path d="M543.5 326 L544.5 316 L546.3 311 L547.8 312 L548.6 318 L549.5 324Z"/>
  <path d="M555 320 L557.5 315.5 L559.5 315.3 L560.5 318Z"/>
 </g>
 <path d="M505 334 L520 338 L536 334 L530 342 L512 342Z" fill="#a88a6a"/>
 <!-- head -->
 <path id="headp" d="M491.2 331.8 C495 332 499.5 333.5 503 335.5 C506 337 508.5 339 509.2 340 C512 337.5 516 336 522 335.8 C528 335.6 534 336.3 538.4 339.6 C542 337.5 546 336.5 550 336 C554 335.6 557.5 335.4 559.8 335.7 C558.5 339.5 556 343.5 552.5 346.5 C549 348.5 544 349.5 540.4 349.3 C539 351 538 352.5 537.4 354.2 C536.5 358 535.8 362 534.5 365.9 C533.5 369 532 371.5 530.6 372.7 C527 374.5 523 374.8 521.9 373.7 C520 372.5 519 372 518 371.7 C515.5 366 513 360 511.5 355 C510.8 352.5 510 350.8 509.2 348.4 C505 348 501 347 499.5 345.4 C496 343.5 494 341.5 493.6 339.6 C492.5 337 491.6 334.5 491.2 331.8Z" fill="#9a8068"/>
 <path d="M494 334 C498 335.5 503 338.5 507 342 C506 345 503 346 500 345 C497 342 495 338 494 334Z" fill="#b8a28a"/>
 <path d="M557.5 337 C553 338 548 340 543.5 343 C545.5 346.5 549 347 552 345.5 C554.5 343 556.5 340 557.5 337Z" fill="#b8a28a"/>
 <path d="M545 346 C549 347.5 553 346.5 556.5 342.5 L557 344 C554 347.5 549 349 545 347.5Z" fill="#5a3a28"/>
 <path d="M509.5 340 C515 337 522 336.5 528 336.5 C533 336.7 536 337.5 538.4 340 C538 344 537.5 347 537 349.5 C530 348.5 520 348.5 510.5 349.5 C510 346 509.6 343 509.5 340Z" fill="#8e755e" filter="url(#soft2)"/>
 <path d="M512 341 C516 339.5 520 339.5 523 341 C520 343 515 343 512 341Z M527 340.5 C530 339.5 534 340 536 341.5 C533 343 529 342.5 527 340.5Z" fill="#bcaa94" filter="url(#soft2)"/>
 <path d="M510.5 350 C520 348.5 530 348.5 537.2 350.5 C536.5 357 535.5 362 534.5 365.9 C533 369.5 531.5 371.8 530.6 372.7 C526 374.6 522 374.6 518 371.7 C515 365 512.5 358 510.5 350Z" fill="#4e3428"/>
 <path d="M510.5 347 C520 345.5 530 345.5 537.4 347.5 L537 352.5 C530 351 520 351 511.5 352.5Z" fill="#6a5040" filter="url(#soft2)"/>
 <path d="M516.5 353.5 C518.5 352.5 521 353 521.8 355 L520.5 357.5 C518.5 356.5 517 355 516.5 353.5Z" fill="#2a1e1c" opacity="0.8"/>
 <path d="M534 353 C532 352.3 529.8 353 529 355 L530.8 357.5 C532.2 356.3 533.5 354.8 534 353Z" fill="#2a1e1c" opacity="0.8"/>
 <path d="M522.5 352 C523.5 357 524 361 524 365 L527.5 365 C527.5 361 527.2 357 526.5 352Z" fill="#7e6a6e" opacity="0.7" filter="url(#soft2)"/>
 <path d="M519.5 366 C522 364 528 364 530.5 366.5 C530.5 369.5 528 371.5 525 371.5 C522 371.5 519.5 369.5 519.5 366Z" fill="#262022"/>
 <path d="M519 371.5 C522 374.5 528 374.5 531 372 C530 376 527 378 525 378 C522.5 378 520 376 519 371.5Z" fill="#b88e58"/>
 </g>
 </g>
</svg>

<svg width="1323" height="719" style="left:0;top:0">
 <!-- transform box -->
 <g fill="none" stroke="#8fa3d6" stroke-width="1">
  <line x1="115" y1="510.5" x2="777" y2="510.5"/>
  <line x1="115.5" y1="510" x2="115.5" y2="674"/>
  <line x1="776.5" y1="510" x2="776.5" y2="674"/>
  <line x1="115" y1="673.5" x2="777" y2="673.5"/>
 </g>
 <g fill="#ffffff" stroke="#4f6fc4" stroke-width="1">
  <rect x="112.5" y="507.5" width="6" height="6"/><rect x="443.5" y="507.5" width="6" height="6"/><rect x="773.5" y="507.5" width="6" height="6"/>
  <rect x="112.5" y="588.5" width="6" height="6"/><rect x="773.5" y="588.5" width="6" height="6"/>
  <rect x="112.5" y="670.5" width="6" height="6"/><rect x="443.5" y="670.5" width="6" height="6"/><rect x="773.5" y="670.5" width="6" height="6"/>
 </g>
</svg>

<div class="t" style="left:62px;top:68.53px;font-size:10px;font-weight:normal;color:#e6e6e6;transform:scaleX(0.9302);">Plik</div>
<div class="t" style="left:86px;top:68.53px;font-size:10px;font-weight:normal;color:#e6e6e6;transform:scaleX(0.8662);">Edycja</div>
<div class="t" style="left:121.7px;top:68.53px;font-size:10px;font-weight:normal;color:#e6e6e6;transform:scaleX(0.9290);">Obraz</div>
<div class="t" style="left:157px;top:68.53px;font-size:10px;font-weight:normal;color:#e6e6e6;transform:scaleX(0.9343);">Warstwa</div>
<div class="t" style="left:203px;top:68.53px;font-size:10px;font-weight:normal;color:#e6e6e6;transform:scaleX(0.8996);">Tekst</div>
<div class="t" style="left:234px;top:68.53px;font-size:10px;font-weight:normal;color:#e6e6e6;transform:scaleX(0.8994);">Zaznaczanie</div>
<div class="t" style="left:295px;top:68.53px;font-size:10px;font-weight:normal;color:#e6e6e6;transform:scaleX(0.9297);">Filtr</div>
<div class="t" style="left:320.8px;top:68.53px;font-size:10px;font-weight:normal;color:#e6e6e6;transform:scaleX(0.9143);">3D</div>
<div class="t" style="left:342.5px;top:68.53px;font-size:10px;font-weight:normal;color:#e6e6e6;transform:scaleX(0.9893);">Widok</div>
<div class="t" style="left:379.5px;top:68.53px;font-size:10px;font-weight:normal;color:#e6e6e6;transform:scaleX(0.9346);">Wtyczki</div>
<div class="t" style="left:421.7px;top:68.53px;font-size:10px;font-weight:normal;color:#e6e6e6;transform:scaleX(0.9621);">Okno</div>
<div class="t" style="left:455px;top:68.53px;font-size:10px;font-weight:normal;color:#e6e6e6;transform:scaleX(0.9221);">Pomoc</div>
<div class="t" style="left:134.7px;top:93.80px;font-size:8.5px;font-weight:normal;color:#e0e0e0;transform:scaleX(0.9051);">Auto-zaznaczanie:</div>
<div class="t" style="left:217.6px;top:94.10px;font-size:8.5px;font-weight:normal;color:#dcdcdc;transform:scaleX(0.9282);">Warstwa</div>
<div class="t" style="left:289.6px;top:94.10px;font-size:8.5px;font-weight:normal;color:#e0e0e0;transform:scaleX(0.9198);">Kontrolki przekształceń</div>
<div class="t" style="left:633.3px;top:93.50px;font-size:8.5px;font-weight:normal;color:#858585;transform:scaleX(0.9913);">Tryb 3D:</div>
<div class="t" style="left:92.3px;top:118.95px;font-size:8.8px;font-weight:bold;color:#f0f0f0;transform:scaleX(0.9775);">kspozcyja.psd @ 16,7% (jelen_tlo,RGB/8)</div>
<div class="t" style="left:266.2px;top:118.03px;font-size:10px;font-weight:normal;color:#a8a8a8;transform:scaleX(1.1979);">×</div>
<div class="t" style="left:39.8px;top:686.17px;font-size:8.3px;font-weight:normal;color:#e0e0e0;transform:scaleX(0.9559);">16,67%</div>
<div class="t" style="left:88px;top:687.57px;font-size:8.3px;font-weight:normal;color:#d8d8d8;transform:scaleX(0.9048);">6201 piks. x4961 piks. (300 ppi)</div>
<div class="t" style="left:42px;top:705.17px;font-size:8.3px;font-weight:bold;color:#f0f0f0;transform:scaleX(0.8782);">Oś czasu</div>
<div class="t" style="left:913.5px;top:128.15px;font-size:8.8px;font-weight:bold;color:#f2f2f2;transform:scaleX(0.8695);">Właściwości</div>
<div class="t" style="left:972px;top:128.15px;font-size:8.8px;font-weight:bold;color:#a4a4a4;transform:scaleX(0.8989);">Informacje</div>
<div class="t" style="left:955.6px;top:153.60px;font-size:8.5px;font-weight:normal;color:#cacaca;transform:scaleX(0.9534);">Warstwa pikseli</div>
<div class="t" style="left:924.6px;top:177.75px;font-size:8.8px;font-weight:bold;color:#ececec;transform:scaleX(0.9053);">Przekształć</div>
<div class="t" style="left:940.6px;top:196.98px;font-size:9px;font-weight:normal;color:#c0c0c0;transform:scaleX(0.7037);">Sz</div>
<div class="t" style="left:955.8px;top:196.98px;font-size:9px;font-weight:normal;color:#e0e0e0;transform:scaleX(0.8603);">6201 piks.</div>
<div class="t" style="left:1035px;top:196.98px;font-size:9px;font-weight:normal;color:#c0c0c0;transform:scaleX(0.8644);">X</div>
<div class="t" style="left:1049.4px;top:196.98px;font-size:9px;font-weight:normal;color:#e0e0e0;transform:scaleX(0.8303);">0 piks.</div>
<div class="t" style="left:940.8px;top:215.98px;font-size:9px;font-weight:normal;color:#c0c0c0;transform:scaleX(0.8471);">W</div>
<div class="t" style="left:956.4px;top:215.98px;font-size:9px;font-weight:normal;color:#e0e0e0;transform:scaleX(0.8433);">1539 piks.</div>
<div class="t" style="left:1035px;top:215.98px;font-size:9px;font-weight:normal;color:#c0c0c0;transform:scaleX(0.8644);">Y</div>
<div class="t" style="left:1048.6px;top:215.98px;font-size:9px;font-weight:normal;color:#e0e0e0;transform:scaleX(0.8798);">3422 piks.</div>
<div class="t" style="left:955.5px;top:240.38px;font-size:9px;font-weight:normal;color:#e0e0e0;transform:scaleX(0.8757);">0,00°</div>
<div class="t" style="left:925px;top:271.75px;font-size:8.8px;font-weight:bold;color:#ececec;transform:scaleX(0.9325);">Wyrównaj i rozmieść</div>
<div class="t" style="left:912px;top:289.60px;font-size:8.5px;font-weight:normal;color:#c4c4c4;transform:scaleX(0.9770);">Wyrównaj:</div>
<div class="t" style="left:925px;top:357.95px;font-size:8.8px;font-weight:bold;color:#ececec;transform:scaleX(0.9203);">Szybkie operacje</div>
<div class="t" style="left:977.4px;top:381.75px;font-size:8.8px;font-weight:normal;color:#e4e4e4;transform:scaleX(0.9169);">Usuń tło</div>
<div class="t" style="left:912px;top:428.75px;font-size:8.8px;font-weight:bold;color:#a4a4a4;transform:scaleX(0.9422);">3D</div>
<div class="t" style="left:938px;top:428.75px;font-size:8.8px;font-weight:bold;color:#f2f2f2;transform:scaleX(0.9119);">Warstwy</div>
<div class="t" style="left:985px;top:428.75px;font-size:8.8px;font-weight:bold;color:#a4a4a4;transform:scaleX(0.8801);">Kanały</div>
<div class="t" style="left:925px;top:456.00px;font-size:8.5px;font-weight:normal;color:#e0e0e0;transform:scaleX(0.9067);">Rodzaj</div>
<div class="t" style="left:914.7px;top:478.20px;font-size:8.5px;font-weight:normal;color:#e0e0e0;transform:scaleX(0.9110);">Normalnie</div>
<div class="t" style="left:1078.4px;top:478.40px;font-size:8.5px;font-weight:normal;color:#d0d0d0;transform:scaleX(0.9236);">Krycie:</div>
<div class="t" style="left:1108.8px;top:478.00px;font-size:8.5px;font-weight:normal;color:#e6e6e6;transform:scaleX(1.0115);">100%</div>
<div class="t" style="left:909.8px;top:500.60px;font-size:8.5px;font-weight:normal;color:#c4c4c4;transform:scaleX(0.9565);">Zablokuj:</div>
<div class="t" style="left:1056px;top:500.60px;font-size:8.5px;font-weight:normal;color:#c4c4c4;transform:scaleX(0.9549);">Wypełnienie:</div>
<div class="t" style="left:1108.8px;top:500.40px;font-size:8.5px;font-weight:normal;color:#e6e6e6;transform:scaleX(1.0115);">100%</div>
<div class="t" style="left:984.9px;top:544.80px;font-size:8.5px;font-weight:normal;color:#e6e6e6;transform:scaleX(0.9621);">jelen kopia</div>
<div class="t" style="left:1007px;top:588.40px;font-size:8.5px;font-weight:normal;color:#e6e6e6;transform:scaleX(0.9437);">krajobraz</div>
<div class="t" style="left:1040.4px;top:632.20px;font-size:8.5px;font-weight:normal;color:#e6e6e6;transform:scaleX(1.0630);">jelen</div>
<div class="t" style="left:1041px;top:676.40px;font-size:8.5px;font-weight:normal;color:#f0f0f0;transform:scaleX(0.9788);">jelen_tlo</div>
</body></html>
